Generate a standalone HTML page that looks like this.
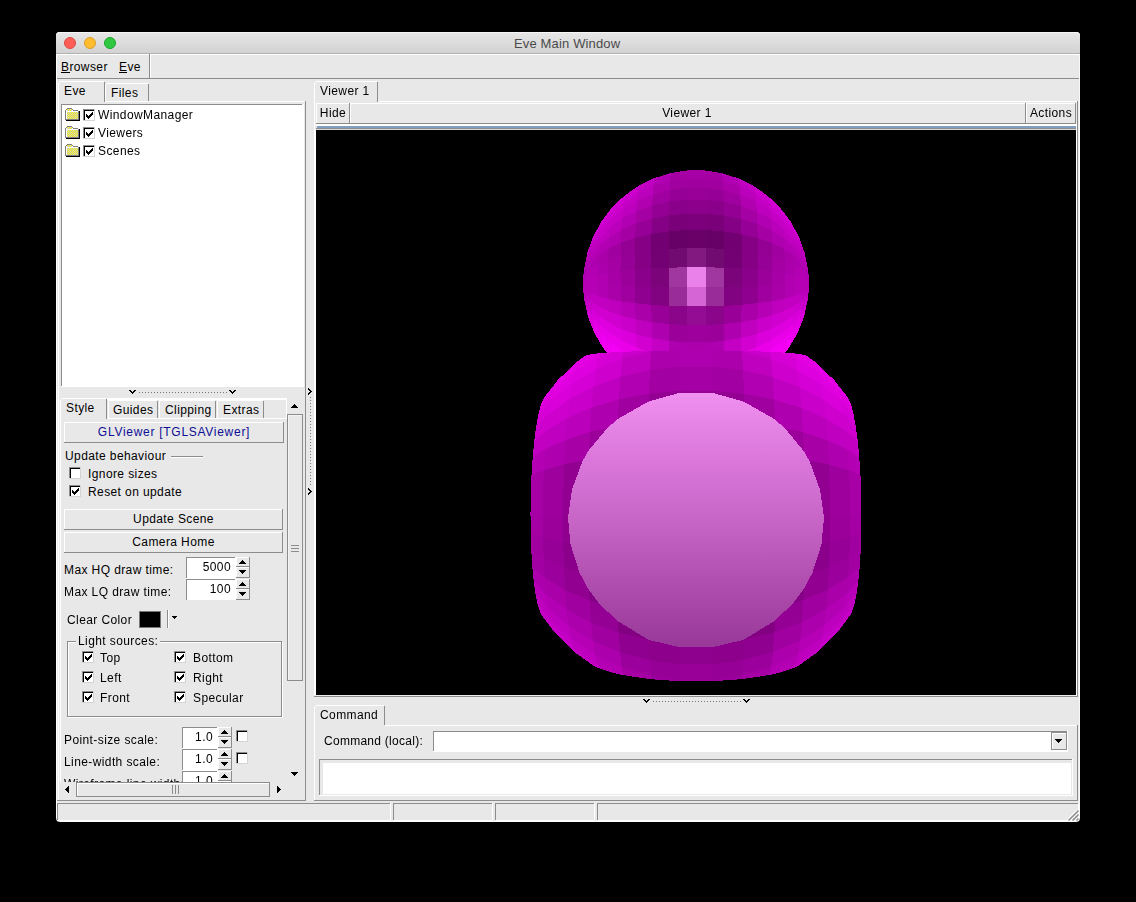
<!DOCTYPE html>
<html><head><meta charset="utf-8"><style>*{margin:0;padding:0;box-sizing:border-box}
html,body{width:1136px;height:902px;overflow:hidden;background:#000}
.a{position:absolute}
.t{font-family:"Liberation Sans", sans-serif;font-size:12px;white-space:nowrap;line-height:0;letter-spacing:0.4px}
</style></head><body>
<div class="a" style="left:56px;top:32px;width:1024px;height:790px;background:#e8e8e8;border-radius:4px 4px 4px 4px"></div><div class="a" style="left:56px;top:32px;width:1024px;height:22px;border-radius:4px 4px 0 0;background:linear-gradient(#e7e7e7,#d1d1d1);box-shadow:inset 0 1px 0 #f6f6f6"></div><div class="a" style="left:56px;top:53px;width:1024px;height:1px;background:#b2b2b2;"></div><div class="a" style="left:64px;top:37px;width:12px;height:12px;border-radius:50%;background:#fd5f57;border:1px solid #df4744"></div><div class="a" style="left:84px;top:37px;width:12px;height:12px;border-radius:50%;background:#febc2e;border:1px solid #de9f27"></div><div class="a" style="left:104px;top:37px;width:12px;height:12px;border-radius:50%;background:#30c841;border:1px solid #1aa62a"></div><div class="a t" style="left:514px;top:44px;font-size:13px;color:#4a4a4a;letter-spacing:0.15px">Eve Main Window</div><div class="a" style="left:57px;top:54px;width:1022px;height:1px;background:#ffffff;"></div><div class="a" style="left:57px;top:78px;width:1022px;height:1px;background:#8c8c8c;"></div><div class="a t" style="left:61px;top:67px;font-size:12px;color:#000;">Browser</div><div class="a" style="left:61px;top:72px;width:9px;height:1px;background:#000;"></div><div class="a t" style="left:119px;top:67px;font-size:12px;color:#000;">Eve</div><div class="a" style="left:119px;top:72px;width:8px;height:1px;background:#000;"></div><div class="a" style="left:149px;top:54px;width:1px;height:24px;background:#8c8c8c;"></div><div class="a" style="left:150px;top:54px;width:1px;height:24px;background:#ffffff;"></div><div class="a" style="left:305px;top:101px;width:1px;height:700px;background:#8c8c8c;"></div><div class="a" style="left:57px;top:800px;width:249px;height:1px;background:#8c8c8c;"></div><div class="a" style="left:58px;top:83px;width:1px;height:717px;background:#ffffff;"></div><div class="a" style="left:60px;top:398px;width:1px;height:400px;background:#ffffff;"></div><div class="a" style="left:107px;top:83px;width:41px;height:1px;background:#ffffff;"></div><div class="a" style="left:106px;top:84px;width:1px;height:1px;background:#ffffff;"></div><div class="a" style="left:105px;top:85px;width:1px;height:16px;background:#ffffff;"></div><div class="a" style="left:148px;top:84px;width:1px;height:17px;background:#8c8c8c;"></div><div class="a" style="left:58px;top:101px;width:247px;height:1px;background:#ffffff;"></div><div class="a" style="left:58px;top:81px;width:47px;height:21px;background:#e8e8e8;"></div><div class="a" style="left:58px;top:81px;width:2px;height:2px;background:#e8e8e8;"></div><div class="a" style="left:60px;top:81px;width:44px;height:1px;background:#ffffff;"></div><div class="a" style="left:59px;top:82px;width:1px;height:1px;background:#ffffff;"></div><div class="a" style="left:58px;top:83px;width:1px;height:19px;background:#ffffff;"></div><div class="a" style="left:104px;top:82px;width:1px;height:20px;background:#8c8c8c;"></div><div class="a t" style="left:64px;top:91px;font-size:12px;color:#000;">Eve</div><div class="a t" style="left:111px;top:93px;font-size:12px;color:#000;">Files</div><div class="a" style="left:61px;top:104px;width:243px;height:283px;background:#fff;"></div><div class="a" style="left:61px;top:104px;width:241px;height:1px;background:#8c8c8c;"></div><div class="a" style="left:61px;top:104px;width:1px;height:282px;background:#8c8c8c;"></div><svg class="a" style="left:64px;top:106px" width="17" height="16" shape-rendering="crispEdges"><defs><pattern id="dz0" width="2" height="2" patternUnits="userSpaceOnUse"><rect width="2" height="2" fill="#c4c4d4"/><rect width="1" height="1" fill="#ffff00"/><rect x="1" y="1" width="1" height="1" fill="#ffff00"/></pattern></defs><rect x="3" y="3" width="5" height="2" fill="url(#dz0)"/><rect x="2" y="5" width="12" height="9" fill="url(#dz0)"/><rect x="2" y="5" width="12" height="1" fill="#fff"/><rect x="2" y="5" width="1" height="9" fill="#fff"/><path d="M3 2h5v1h-5z M2 3h1v1h-1z M8 3h1v1h-1z M1 4h1v10h-1z M9 4h5v1h-5z M14 5h1v9h-1z M2 13h12v1h-12z" fill="#808080"/><path d="M2 14h14v1h-14z M15 5h1v9h-1z" fill="#000"/></svg><div class="a" style="left:83px;top:109px;width:12px;height:12px;background:#fff;"></div><div class="a" style="left:83px;top:109px;width:12px;height:1px;background:#8c8c8c;"></div><div class="a" style="left:83px;top:109px;width:1px;height:12px;background:#8c8c8c;"></div><div class="a" style="left:84px;top:110px;width:10px;height:1px;background:#000;"></div><div class="a" style="left:84px;top:110px;width:1px;height:10px;background:#000;"></div><div class="a" style="left:83px;top:120px;width:12px;height:1px;background:#d4d4d4;"></div><div class="a" style="left:94px;top:109px;width:1px;height:12px;background:#d4d4d4;"></div><svg class="a" style="left:83px;top:109px" width="12" height="12" shape-rendering="crispEdges"><path d="M3 5h1v3h-1zM4 6h1v3h-1zM5 7h1v3h-1zM6 6h1v3h-1zM7 5h1v3h-1zM8 4h1v3h-1zM9 3h1v3h-1z" fill="#000"/></svg><div class="a t" style="left:98px;top:115px;font-size:12px;color:#000;will-change:transform">WindowManager</div><svg class="a" style="left:64px;top:124px" width="17" height="16" shape-rendering="crispEdges"><defs><pattern id="dz1" width="2" height="2" patternUnits="userSpaceOnUse"><rect width="2" height="2" fill="#c4c4d4"/><rect width="1" height="1" fill="#ffff00"/><rect x="1" y="1" width="1" height="1" fill="#ffff00"/></pattern></defs><rect x="3" y="3" width="5" height="2" fill="url(#dz1)"/><rect x="2" y="5" width="12" height="9" fill="url(#dz1)"/><rect x="2" y="5" width="12" height="1" fill="#fff"/><rect x="2" y="5" width="1" height="9" fill="#fff"/><path d="M3 2h5v1h-5z M2 3h1v1h-1z M8 3h1v1h-1z M1 4h1v10h-1z M9 4h5v1h-5z M14 5h1v9h-1z M2 13h12v1h-12z" fill="#808080"/><path d="M2 14h14v1h-14z M15 5h1v9h-1z" fill="#000"/></svg><div class="a" style="left:83px;top:127px;width:12px;height:12px;background:#fff;"></div><div class="a" style="left:83px;top:127px;width:12px;height:1px;background:#8c8c8c;"></div><div class="a" style="left:83px;top:127px;width:1px;height:12px;background:#8c8c8c;"></div><div class="a" style="left:84px;top:128px;width:10px;height:1px;background:#000;"></div><div class="a" style="left:84px;top:128px;width:1px;height:10px;background:#000;"></div><div class="a" style="left:83px;top:138px;width:12px;height:1px;background:#d4d4d4;"></div><div class="a" style="left:94px;top:127px;width:1px;height:12px;background:#d4d4d4;"></div><svg class="a" style="left:83px;top:127px" width="12" height="12" shape-rendering="crispEdges"><path d="M3 5h1v3h-1zM4 6h1v3h-1zM5 7h1v3h-1zM6 6h1v3h-1zM7 5h1v3h-1zM8 4h1v3h-1zM9 3h1v3h-1z" fill="#000"/></svg><div class="a t" style="left:98px;top:133px;font-size:12px;color:#000;will-change:transform">Viewers</div><svg class="a" style="left:64px;top:142px" width="17" height="16" shape-rendering="crispEdges"><defs><pattern id="dz2" width="2" height="2" patternUnits="userSpaceOnUse"><rect width="2" height="2" fill="#c4c4d4"/><rect width="1" height="1" fill="#ffff00"/><rect x="1" y="1" width="1" height="1" fill="#ffff00"/></pattern></defs><rect x="3" y="3" width="5" height="2" fill="url(#dz2)"/><rect x="2" y="5" width="12" height="9" fill="url(#dz2)"/><rect x="2" y="5" width="12" height="1" fill="#fff"/><rect x="2" y="5" width="1" height="9" fill="#fff"/><path d="M3 2h5v1h-5z M2 3h1v1h-1z M8 3h1v1h-1z M1 4h1v10h-1z M9 4h5v1h-5z M14 5h1v9h-1z M2 13h12v1h-12z" fill="#808080"/><path d="M2 14h14v1h-14z M15 5h1v9h-1z" fill="#000"/></svg><div class="a" style="left:83px;top:145px;width:12px;height:12px;background:#fff;"></div><div class="a" style="left:83px;top:145px;width:12px;height:1px;background:#8c8c8c;"></div><div class="a" style="left:83px;top:145px;width:1px;height:12px;background:#8c8c8c;"></div><div class="a" style="left:84px;top:146px;width:10px;height:1px;background:#000;"></div><div class="a" style="left:84px;top:146px;width:1px;height:10px;background:#000;"></div><div class="a" style="left:83px;top:156px;width:12px;height:1px;background:#d4d4d4;"></div><div class="a" style="left:94px;top:145px;width:1px;height:12px;background:#d4d4d4;"></div><svg class="a" style="left:83px;top:145px" width="12" height="12" shape-rendering="crispEdges"><path d="M3 5h1v3h-1zM4 6h1v3h-1zM5 7h1v3h-1zM6 6h1v3h-1zM7 5h1v3h-1zM8 4h1v3h-1zM9 3h1v3h-1z" fill="#000"/></svg><div class="a t" style="left:98px;top:151px;font-size:12px;color:#000;will-change:transform">Scenes</div><div class="a" style="left:139px;top:392px;width:1px;height:1px;background:#777;"></div><div class="a" style="left:142px;top:392px;width:1px;height:1px;background:#777;"></div><div class="a" style="left:145px;top:392px;width:1px;height:1px;background:#777;"></div><div class="a" style="left:148px;top:392px;width:1px;height:1px;background:#777;"></div><div class="a" style="left:151px;top:392px;width:1px;height:1px;background:#777;"></div><div class="a" style="left:154px;top:392px;width:1px;height:1px;background:#777;"></div><div class="a" style="left:157px;top:392px;width:1px;height:1px;background:#777;"></div><div class="a" style="left:160px;top:392px;width:1px;height:1px;background:#777;"></div><div class="a" style="left:163px;top:392px;width:1px;height:1px;background:#777;"></div><div class="a" style="left:166px;top:392px;width:1px;height:1px;background:#777;"></div><div class="a" style="left:169px;top:392px;width:1px;height:1px;background:#777;"></div><div class="a" style="left:172px;top:392px;width:1px;height:1px;background:#777;"></div><div class="a" style="left:175px;top:392px;width:1px;height:1px;background:#777;"></div><div class="a" style="left:178px;top:392px;width:1px;height:1px;background:#777;"></div><div class="a" style="left:181px;top:392px;width:1px;height:1px;background:#777;"></div><div class="a" style="left:184px;top:392px;width:1px;height:1px;background:#777;"></div><div class="a" style="left:187px;top:392px;width:1px;height:1px;background:#777;"></div><div class="a" style="left:190px;top:392px;width:1px;height:1px;background:#777;"></div><div class="a" style="left:193px;top:392px;width:1px;height:1px;background:#777;"></div><div class="a" style="left:196px;top:392px;width:1px;height:1px;background:#777;"></div><div class="a" style="left:199px;top:392px;width:1px;height:1px;background:#777;"></div><div class="a" style="left:202px;top:392px;width:1px;height:1px;background:#777;"></div><div class="a" style="left:205px;top:392px;width:1px;height:1px;background:#777;"></div><div class="a" style="left:208px;top:392px;width:1px;height:1px;background:#777;"></div><div class="a" style="left:211px;top:392px;width:1px;height:1px;background:#777;"></div><div class="a" style="left:214px;top:392px;width:1px;height:1px;background:#777;"></div><div class="a" style="left:217px;top:392px;width:1px;height:1px;background:#777;"></div><div class="a" style="left:220px;top:392px;width:1px;height:1px;background:#777;"></div><div class="a" style="left:223px;top:392px;width:1px;height:1px;background:#777;"></div><div class="a" style="left:226px;top:392px;width:1px;height:1px;background:#777;"></div><div class="a" style="left:60px;top:418px;width:227px;height:1px;background:#ffffff;"></div><div class="a" style="left:107px;top:398px;width:180px;height:2px;background:#ffffff;"></div><div class="a" style="left:286px;top:398px;width:1px;height:21px;background:#ffffff;"></div><div class="a" style="left:108px;top:400px;width:49px;height:1px;background:#ffffff;"></div><div class="a" style="left:108px;top:401px;width:1px;height:17px;background:#ffffff;"></div><div class="a" style="left:157px;top:401px;width:1px;height:17px;background:#8c8c8c;"></div><div class="a t" style="left:113px;top:410px;font-size:12px;color:#000;">Guides</div><div class="a" style="left:159px;top:400px;width:56px;height:1px;background:#ffffff;"></div><div class="a" style="left:159px;top:401px;width:1px;height:17px;background:#ffffff;"></div><div class="a" style="left:215px;top:401px;width:1px;height:17px;background:#8c8c8c;"></div><div class="a t" style="left:165px;top:410px;font-size:12px;color:#000;">Clipping</div><div class="a" style="left:217px;top:400px;width:46px;height:1px;background:#ffffff;"></div><div class="a" style="left:217px;top:401px;width:1px;height:17px;background:#ffffff;"></div><div class="a" style="left:263px;top:401px;width:1px;height:17px;background:#8c8c8c;"></div><div class="a t" style="left:223px;top:410px;font-size:12px;color:#000;">Extras</div><div class="a" style="left:60px;top:398px;width:47px;height:21px;background:#e8e8e8;"></div><div class="a" style="left:62px;top:398px;width:44px;height:1px;background:#ffffff;"></div><div class="a" style="left:60px;top:400px;width:1px;height:19px;background:#ffffff;"></div><div class="a" style="left:61px;top:399px;width:1px;height:1px;background:#ffffff;"></div><div class="a" style="left:106px;top:399px;width:1px;height:20px;background:#8c8c8c;"></div><div class="a t" style="left:66px;top:408px;font-size:12px;color:#000;">Style</div><div class="a" style="left:64px;top:422px;width:220px;height:21px;background:#e8e8e8;"></div><div class="a" style="left:64px;top:422px;width:220px;height:1px;background:#ffffff;"></div><div class="a" style="left:64px;top:422px;width:1px;height:21px;background:#ffffff;"></div><div class="a" style="left:64px;top:442px;width:220px;height:1px;background:#8c8c8c;"></div><div class="a" style="left:283px;top:422px;width:1px;height:21px;background:#8c8c8c;"></div><div class="a t" style="left:-26.0px;width:400px;text-align:center;top:432px;font-size:12px;color:#0e0e96;"><span style="letter-spacing:0.72px">GLViewer [TGLSAViewer]</span></div><div class="a t" style="left:65px;top:456px;font-size:12px;color:#000;">Update behaviour</div><div class="a" style="left:171px;top:456px;width:32px;height:1px;background:#8c8c8c;"></div><div class="a" style="left:171px;top:457px;width:32px;height:1px;background:#ffffff;"></div><div class="a" style="left:69px;top:467px;width:12px;height:12px;background:#fff;"></div><div class="a" style="left:69px;top:467px;width:12px;height:1px;background:#8c8c8c;"></div><div class="a" style="left:69px;top:467px;width:1px;height:12px;background:#8c8c8c;"></div><div class="a" style="left:70px;top:468px;width:10px;height:1px;background:#000;"></div><div class="a" style="left:70px;top:468px;width:1px;height:10px;background:#000;"></div><div class="a" style="left:69px;top:478px;width:12px;height:1px;background:#d4d4d4;"></div><div class="a" style="left:80px;top:467px;width:1px;height:12px;background:#d4d4d4;"></div><div class="a t" style="left:88px;top:474px;font-size:12px;color:#000;">Ignore sizes</div><div class="a" style="left:69px;top:485px;width:12px;height:12px;background:#fff;"></div><div class="a" style="left:69px;top:485px;width:12px;height:1px;background:#8c8c8c;"></div><div class="a" style="left:69px;top:485px;width:1px;height:12px;background:#8c8c8c;"></div><div class="a" style="left:70px;top:486px;width:10px;height:1px;background:#000;"></div><div class="a" style="left:70px;top:486px;width:1px;height:10px;background:#000;"></div><div class="a" style="left:69px;top:496px;width:12px;height:1px;background:#d4d4d4;"></div><div class="a" style="left:80px;top:485px;width:1px;height:12px;background:#d4d4d4;"></div><svg class="a" style="left:69px;top:485px" width="12" height="12" shape-rendering="crispEdges"><path d="M3 5h1v3h-1zM4 6h1v3h-1zM5 7h1v3h-1zM6 6h1v3h-1zM7 5h1v3h-1zM8 4h1v3h-1zM9 3h1v3h-1z" fill="#000"/></svg><div class="a t" style="left:88px;top:492px;font-size:12px;color:#000;">Reset on update</div><div class="a" style="left:64px;top:509px;width:219px;height:21px;background:#e8e8e8;"></div><div class="a" style="left:64px;top:509px;width:219px;height:1px;background:#ffffff;"></div><div class="a" style="left:64px;top:509px;width:1px;height:21px;background:#ffffff;"></div><div class="a" style="left:64px;top:529px;width:219px;height:1px;background:#8c8c8c;"></div><div class="a" style="left:282px;top:509px;width:1px;height:21px;background:#8c8c8c;"></div><div class="a t" style="left:-26.5px;width:400px;text-align:center;top:519px;font-size:12px;color:#000;">Update Scene</div><div class="a" style="left:64px;top:532px;width:219px;height:21px;background:#e8e8e8;"></div><div class="a" style="left:64px;top:532px;width:219px;height:1px;background:#ffffff;"></div><div class="a" style="left:64px;top:532px;width:1px;height:21px;background:#ffffff;"></div><div class="a" style="left:64px;top:552px;width:219px;height:1px;background:#8c8c8c;"></div><div class="a" style="left:282px;top:532px;width:1px;height:21px;background:#8c8c8c;"></div><div class="a t" style="left:-26.5px;width:400px;text-align:center;top:542px;font-size:12px;color:#000;">Camera Home</div><div class="a t" style="left:64px;top:570px;font-size:12px;color:#000;">Max HQ draw time:</div><div class="a" style="left:186px;top:557px;width:50px;height:22px;background:#fff;"></div><div class="a" style="left:236px;top:557px;width:14px;height:21px;background:#fff;"></div><div class="a" style="left:186px;top:557px;width:49px;height:1px;background:#8c8c8c;"></div><div class="a" style="left:186px;top:557px;width:1px;height:21px;background:#8c8c8c;"></div><div class="a" style="left:249px;top:557px;width:1px;height:21px;background:#8c8c8c;"></div><div class="a" style="left:237px;top:558px;width:12px;height:8px;background:#e8e8e8;"></div><div class="a" style="left:236px;top:566px;width:14px;height:1px;background:#8c8c8c;"></div><div class="a" style="left:237px;top:568px;width:12px;height:9px;background:#e8e8e8;"></div><div class="a" style="left:236px;top:577px;width:14px;height:1px;background:#8c8c8c;"></div><svg class="a" style="left:0;top:0" width="1136" height="902" shape-rendering="crispEdges"><path d="M242 560h1v1h-1zM241 561h3v1h-3zM240 562h5v1h-5zM239 563h7v1h-7z" fill="#000"/></svg><svg class="a" style="left:0;top:0" width="1136" height="902" shape-rendering="crispEdges"><path d="M239 570h7v1h-7zM240 571h5v1h-5zM241 572h3v1h-3zM242 573h1v1h-1z" fill="#000"/></svg><div class="a t" style="left:31px;width:200px;text-align:right;top:567px;font-size:12px;color:#000;">5000</div><div class="a t" style="left:64px;top:592px;font-size:12px;color:#000;">Max LQ draw time:</div><div class="a" style="left:186px;top:579px;width:64px;height:21px;background:#fff;"></div><div class="a" style="left:236px;top:579px;width:14px;height:21px;background:#fff;"></div><div class="a" style="left:186px;top:579px;width:49px;height:1px;background:#8c8c8c;"></div><div class="a" style="left:186px;top:579px;width:1px;height:21px;background:#8c8c8c;"></div><div class="a" style="left:249px;top:579px;width:1px;height:21px;background:#8c8c8c;"></div><div class="a" style="left:237px;top:580px;width:12px;height:8px;background:#e8e8e8;"></div><div class="a" style="left:236px;top:588px;width:14px;height:1px;background:#8c8c8c;"></div><div class="a" style="left:237px;top:590px;width:12px;height:9px;background:#e8e8e8;"></div><div class="a" style="left:236px;top:599px;width:14px;height:1px;background:#8c8c8c;"></div><svg class="a" style="left:0;top:0" width="1136" height="902" shape-rendering="crispEdges"><path d="M242 582h1v1h-1zM241 583h3v1h-3zM240 584h5v1h-5zM239 585h7v1h-7z" fill="#000"/></svg><svg class="a" style="left:0;top:0" width="1136" height="902" shape-rendering="crispEdges"><path d="M239 592h7v1h-7zM240 593h5v1h-5zM241 594h3v1h-3zM242 595h1v1h-1z" fill="#000"/></svg><div class="a t" style="left:31px;width:200px;text-align:right;top:589px;font-size:12px;color:#000;">100</div><div class="a t" style="left:67px;top:620px;font-size:12px;color:#000;">Clear Color</div><div class="a" style="left:139px;top:611px;width:22px;height:17px;background:#000;border:1px solid #777"></div><div class="a" style="left:167px;top:610px;width:1px;height:18px;background:#8c8c8c;"></div><div class="a" style="left:168px;top:610px;width:1px;height:18px;background:#ffffff;"></div><svg class="a" style="left:0;top:0" width="1136" height="902" shape-rendering="crispEdges"><path d="M172 616h5v1h-5zM173 617h3v1h-3zM174 618h1v1h-1z" fill="#000"/></svg><div class="a" style="left:67px;top:641px;width:215px;height:76px;border:1px solid #8c8c8c;box-shadow:1px 1px 0 #fff, inset 1px 1px 0 #fff"></div><div class="a" style="left:76px;top:636px;width:84px;height:10px;background:#e8e8e8;"></div><div class="a t" style="left:78px;top:641px;font-size:12px;color:#000;">Light sources:</div><div class="a" style="left:82px;top:651px;width:12px;height:12px;background:#fff;"></div><div class="a" style="left:82px;top:651px;width:12px;height:1px;background:#8c8c8c;"></div><div class="a" style="left:82px;top:651px;width:1px;height:12px;background:#8c8c8c;"></div><div class="a" style="left:83px;top:652px;width:10px;height:1px;background:#000;"></div><div class="a" style="left:83px;top:652px;width:1px;height:10px;background:#000;"></div><div class="a" style="left:82px;top:662px;width:12px;height:1px;background:#d4d4d4;"></div><div class="a" style="left:93px;top:651px;width:1px;height:12px;background:#d4d4d4;"></div><svg class="a" style="left:82px;top:651px" width="12" height="12" shape-rendering="crispEdges"><path d="M3 5h1v3h-1zM4 6h1v3h-1zM5 7h1v3h-1zM6 6h1v3h-1zM7 5h1v3h-1zM8 4h1v3h-1zM9 3h1v3h-1z" fill="#000"/></svg><div class="a t" style="left:100px;top:658px;font-size:12px;color:#000;">Top</div><div class="a" style="left:174px;top:651px;width:12px;height:12px;background:#fff;"></div><div class="a" style="left:174px;top:651px;width:12px;height:1px;background:#8c8c8c;"></div><div class="a" style="left:174px;top:651px;width:1px;height:12px;background:#8c8c8c;"></div><div class="a" style="left:175px;top:652px;width:10px;height:1px;background:#000;"></div><div class="a" style="left:175px;top:652px;width:1px;height:10px;background:#000;"></div><div class="a" style="left:174px;top:662px;width:12px;height:1px;background:#d4d4d4;"></div><div class="a" style="left:185px;top:651px;width:1px;height:12px;background:#d4d4d4;"></div><svg class="a" style="left:174px;top:651px" width="12" height="12" shape-rendering="crispEdges"><path d="M3 5h1v3h-1zM4 6h1v3h-1zM5 7h1v3h-1zM6 6h1v3h-1zM7 5h1v3h-1zM8 4h1v3h-1zM9 3h1v3h-1z" fill="#000"/></svg><div class="a t" style="left:193px;top:658px;font-size:12px;color:#000;">Bottom</div><div class="a" style="left:82px;top:671px;width:12px;height:12px;background:#fff;"></div><div class="a" style="left:82px;top:671px;width:12px;height:1px;background:#8c8c8c;"></div><div class="a" style="left:82px;top:671px;width:1px;height:12px;background:#8c8c8c;"></div><div class="a" style="left:83px;top:672px;width:10px;height:1px;background:#000;"></div><div class="a" style="left:83px;top:672px;width:1px;height:10px;background:#000;"></div><div class="a" style="left:82px;top:682px;width:12px;height:1px;background:#d4d4d4;"></div><div class="a" style="left:93px;top:671px;width:1px;height:12px;background:#d4d4d4;"></div><svg class="a" style="left:82px;top:671px" width="12" height="12" shape-rendering="crispEdges"><path d="M3 5h1v3h-1zM4 6h1v3h-1zM5 7h1v3h-1zM6 6h1v3h-1zM7 5h1v3h-1zM8 4h1v3h-1zM9 3h1v3h-1z" fill="#000"/></svg><div class="a t" style="left:100px;top:678px;font-size:12px;color:#000;">Left</div><div class="a" style="left:174px;top:671px;width:12px;height:12px;background:#fff;"></div><div class="a" style="left:174px;top:671px;width:12px;height:1px;background:#8c8c8c;"></div><div class="a" style="left:174px;top:671px;width:1px;height:12px;background:#8c8c8c;"></div><div class="a" style="left:175px;top:672px;width:10px;height:1px;background:#000;"></div><div class="a" style="left:175px;top:672px;width:1px;height:10px;background:#000;"></div><div class="a" style="left:174px;top:682px;width:12px;height:1px;background:#d4d4d4;"></div><div class="a" style="left:185px;top:671px;width:1px;height:12px;background:#d4d4d4;"></div><svg class="a" style="left:174px;top:671px" width="12" height="12" shape-rendering="crispEdges"><path d="M3 5h1v3h-1zM4 6h1v3h-1zM5 7h1v3h-1zM6 6h1v3h-1zM7 5h1v3h-1zM8 4h1v3h-1zM9 3h1v3h-1z" fill="#000"/></svg><div class="a t" style="left:193px;top:678px;font-size:12px;color:#000;">Right</div><div class="a" style="left:82px;top:691px;width:12px;height:12px;background:#fff;"></div><div class="a" style="left:82px;top:691px;width:12px;height:1px;background:#8c8c8c;"></div><div class="a" style="left:82px;top:691px;width:1px;height:12px;background:#8c8c8c;"></div><div class="a" style="left:83px;top:692px;width:10px;height:1px;background:#000;"></div><div class="a" style="left:83px;top:692px;width:1px;height:10px;background:#000;"></div><div class="a" style="left:82px;top:702px;width:12px;height:1px;background:#d4d4d4;"></div><div class="a" style="left:93px;top:691px;width:1px;height:12px;background:#d4d4d4;"></div><svg class="a" style="left:82px;top:691px" width="12" height="12" shape-rendering="crispEdges"><path d="M3 5h1v3h-1zM4 6h1v3h-1zM5 7h1v3h-1zM6 6h1v3h-1zM7 5h1v3h-1zM8 4h1v3h-1zM9 3h1v3h-1z" fill="#000"/></svg><div class="a t" style="left:100px;top:698px;font-size:12px;color:#000;">Front</div><div class="a" style="left:174px;top:691px;width:12px;height:12px;background:#fff;"></div><div class="a" style="left:174px;top:691px;width:12px;height:1px;background:#8c8c8c;"></div><div class="a" style="left:174px;top:691px;width:1px;height:12px;background:#8c8c8c;"></div><div class="a" style="left:175px;top:692px;width:10px;height:1px;background:#000;"></div><div class="a" style="left:175px;top:692px;width:1px;height:10px;background:#000;"></div><div class="a" style="left:174px;top:702px;width:12px;height:1px;background:#d4d4d4;"></div><div class="a" style="left:185px;top:691px;width:1px;height:12px;background:#d4d4d4;"></div><svg class="a" style="left:174px;top:691px" width="12" height="12" shape-rendering="crispEdges"><path d="M3 5h1v3h-1zM4 6h1v3h-1zM5 7h1v3h-1zM6 6h1v3h-1zM7 5h1v3h-1zM8 4h1v3h-1zM9 3h1v3h-1z" fill="#000"/></svg><div class="a t" style="left:193px;top:698px;font-size:12px;color:#000;">Specular</div><div class="a t" style="left:64px;top:740px;font-size:12px;color:#000;">Point-size scale:</div><div class="a" style="left:182px;top:727px;width:36px;height:22px;background:#fff;"></div><div class="a" style="left:218px;top:727px;width:14px;height:21px;background:#fff;"></div><div class="a" style="left:182px;top:727px;width:35px;height:1px;background:#8c8c8c;"></div><div class="a" style="left:182px;top:727px;width:1px;height:21px;background:#8c8c8c;"></div><div class="a" style="left:231px;top:727px;width:1px;height:21px;background:#8c8c8c;"></div><div class="a" style="left:219px;top:728px;width:12px;height:8px;background:#e8e8e8;"></div><div class="a" style="left:218px;top:736px;width:14px;height:1px;background:#8c8c8c;"></div><div class="a" style="left:219px;top:738px;width:12px;height:9px;background:#e8e8e8;"></div><div class="a" style="left:218px;top:747px;width:14px;height:1px;background:#8c8c8c;"></div><svg class="a" style="left:0;top:0" width="1136" height="902" shape-rendering="crispEdges"><path d="M224 730h1v1h-1zM223 731h3v1h-3zM222 732h5v1h-5zM221 733h7v1h-7z" fill="#000"/></svg><svg class="a" style="left:0;top:0" width="1136" height="902" shape-rendering="crispEdges"><path d="M221 740h7v1h-7zM222 741h5v1h-5zM223 742h3v1h-3zM224 743h1v1h-1z" fill="#000"/></svg><div class="a t" style="left:13px;width:200px;text-align:right;top:737px;font-size:12px;color:#000;">1.0</div><div class="a" style="left:236px;top:730px;width:12px;height:12px;background:#fff;"></div><div class="a" style="left:236px;top:730px;width:12px;height:1px;background:#8c8c8c;"></div><div class="a" style="left:236px;top:730px;width:1px;height:12px;background:#8c8c8c;"></div><div class="a" style="left:237px;top:731px;width:10px;height:1px;background:#000;"></div><div class="a" style="left:237px;top:731px;width:1px;height:10px;background:#000;"></div><div class="a" style="left:236px;top:741px;width:12px;height:1px;background:#d4d4d4;"></div><div class="a" style="left:247px;top:730px;width:1px;height:12px;background:#d4d4d4;"></div><div class="a t" style="left:64px;top:762px;font-size:12px;color:#000;">Line-width scale:</div><div class="a" style="left:182px;top:749px;width:36px;height:22px;background:#fff;"></div><div class="a" style="left:218px;top:749px;width:14px;height:21px;background:#fff;"></div><div class="a" style="left:182px;top:749px;width:35px;height:1px;background:#8c8c8c;"></div><div class="a" style="left:182px;top:749px;width:1px;height:21px;background:#8c8c8c;"></div><div class="a" style="left:231px;top:749px;width:1px;height:21px;background:#8c8c8c;"></div><div class="a" style="left:219px;top:750px;width:12px;height:8px;background:#e8e8e8;"></div><div class="a" style="left:218px;top:758px;width:14px;height:1px;background:#8c8c8c;"></div><div class="a" style="left:219px;top:760px;width:12px;height:9px;background:#e8e8e8;"></div><div class="a" style="left:218px;top:769px;width:14px;height:1px;background:#8c8c8c;"></div><svg class="a" style="left:0;top:0" width="1136" height="902" shape-rendering="crispEdges"><path d="M224 752h1v1h-1zM223 753h3v1h-3zM222 754h5v1h-5zM221 755h7v1h-7z" fill="#000"/></svg><svg class="a" style="left:0;top:0" width="1136" height="902" shape-rendering="crispEdges"><path d="M221 762h7v1h-7zM222 763h5v1h-5zM223 764h3v1h-3zM224 765h1v1h-1z" fill="#000"/></svg><div class="a t" style="left:13px;width:200px;text-align:right;top:759px;font-size:12px;color:#000;">1.0</div><div class="a" style="left:236px;top:752px;width:12px;height:12px;background:#fff;"></div><div class="a" style="left:236px;top:752px;width:12px;height:1px;background:#8c8c8c;"></div><div class="a" style="left:236px;top:752px;width:1px;height:12px;background:#8c8c8c;"></div><div class="a" style="left:237px;top:753px;width:10px;height:1px;background:#000;"></div><div class="a" style="left:237px;top:753px;width:1px;height:10px;background:#000;"></div><div class="a" style="left:236px;top:763px;width:12px;height:1px;background:#d4d4d4;"></div><div class="a" style="left:247px;top:752px;width:1px;height:12px;background:#d4d4d4;"></div><div class="a" style="left:60px;top:771px;width:226px;height:11px;overflow:hidden"><div class="a t" style="left:4px;top:13px">Wireframe line width:</div></div><div class="a" style="left:182px;top:771px;width:36px;height:22px;background:#fff;"></div><div class="a" style="left:218px;top:771px;width:14px;height:21px;background:#fff;"></div><div class="a" style="left:182px;top:771px;width:35px;height:1px;background:#8c8c8c;"></div><div class="a" style="left:182px;top:771px;width:1px;height:21px;background:#8c8c8c;"></div><div class="a" style="left:231px;top:771px;width:1px;height:21px;background:#8c8c8c;"></div><div class="a" style="left:219px;top:772px;width:12px;height:8px;background:#e8e8e8;"></div><div class="a" style="left:218px;top:780px;width:14px;height:1px;background:#8c8c8c;"></div><div class="a" style="left:219px;top:782px;width:12px;height:9px;background:#e8e8e8;"></div><div class="a" style="left:218px;top:791px;width:14px;height:1px;background:#8c8c8c;"></div><svg class="a" style="left:0;top:0" width="1136" height="902" shape-rendering="crispEdges"><path d="M224 774h1v1h-1zM223 775h3v1h-3zM222 776h5v1h-5zM221 777h7v1h-7z" fill="#000"/></svg><svg class="a" style="left:0;top:0" width="1136" height="902" shape-rendering="crispEdges"><path d="M221 784h7v1h-7zM222 785h5v1h-5zM223 786h3v1h-3zM224 787h1v1h-1z" fill="#000"/></svg><div class="a t" style="left:13px;width:200px;text-align:right;top:781px;font-size:12px;color:#000;">1.0</div><div class="a" style="left:60px;top:782px;width:226px;height:16px;background:#e8e8e8;"></div><svg class="a" style="left:0;top:0" width="1136" height="902" shape-rendering="crispEdges"><path d="M294 404h1v1h-1zM293 405h3v1h-3zM292 406h5v1h-5zM291 407h7v1h-7z" fill="#000"/></svg><div class="a" style="left:287px;top:414px;width:16px;height:267px;background:#e8e8e8;border:1px solid #8c8c8c"></div><div class="a" style="left:288px;top:415px;width:14px;height:1px;background:#f4f4f4;"></div><div class="a" style="left:288px;top:415px;width:1px;height:265px;background:#f4f4f4;"></div><div class="a" style="left:291px;top:545px;width:8px;height:1px;background:#8c8c8c;"></div><div class="a" style="left:291px;top:548px;width:8px;height:1px;background:#8c8c8c;"></div><div class="a" style="left:291px;top:551px;width:8px;height:1px;background:#8c8c8c;"></div><svg class="a" style="left:0;top:0" width="1136" height="902" shape-rendering="crispEdges"><path d="M291 772h7v1h-7zM292 773h5v1h-5zM293 774h3v1h-3zM294 775h1v1h-1z" fill="#000"/></svg><svg class="a" style="left:0;top:0" width="1136" height="902" shape-rendering="crispEdges"><path d="M65 789v1h1v-1zM66 788v3h1v-3zM67 787v5h1v-5zM68 786v7h1v-7z" fill="#000"/></svg><div class="a" style="left:76px;top:782px;width:194px;height:15px;background:#e8e8e8;border:1px solid #8c8c8c"></div><div class="a" style="left:77px;top:783px;width:192px;height:1px;background:#ffffff;"></div><div class="a" style="left:77px;top:783px;width:1px;height:13px;background:#ffffff;"></div><div class="a" style="left:172px;top:785px;width:1px;height:9px;background:#8c8c8c;"></div><div class="a" style="left:175px;top:785px;width:1px;height:9px;background:#8c8c8c;"></div><div class="a" style="left:178px;top:785px;width:1px;height:9px;background:#8c8c8c;"></div><svg class="a" style="left:0;top:0" width="1136" height="902" shape-rendering="crispEdges"><path d="M277 786v7h1v-7zM278 787v5h1v-5zM279 788v3h1v-3zM280 789v1h1v-1z" fill="#000"/></svg><div class="a" style="left:310px;top:397px;width:1px;height:1px;background:#777;"></div><div class="a" style="left:310px;top:400px;width:1px;height:1px;background:#777;"></div><div class="a" style="left:310px;top:403px;width:1px;height:1px;background:#777;"></div><div class="a" style="left:310px;top:406px;width:1px;height:1px;background:#777;"></div><div class="a" style="left:310px;top:409px;width:1px;height:1px;background:#777;"></div><div class="a" style="left:310px;top:412px;width:1px;height:1px;background:#777;"></div><div class="a" style="left:310px;top:415px;width:1px;height:1px;background:#777;"></div><div class="a" style="left:310px;top:418px;width:1px;height:1px;background:#777;"></div><div class="a" style="left:310px;top:421px;width:1px;height:1px;background:#777;"></div><div class="a" style="left:310px;top:424px;width:1px;height:1px;background:#777;"></div><div class="a" style="left:310px;top:427px;width:1px;height:1px;background:#777;"></div><div class="a" style="left:310px;top:430px;width:1px;height:1px;background:#777;"></div><div class="a" style="left:310px;top:433px;width:1px;height:1px;background:#777;"></div><div class="a" style="left:310px;top:436px;width:1px;height:1px;background:#777;"></div><div class="a" style="left:310px;top:439px;width:1px;height:1px;background:#777;"></div><div class="a" style="left:310px;top:442px;width:1px;height:1px;background:#777;"></div><div class="a" style="left:310px;top:445px;width:1px;height:1px;background:#777;"></div><div class="a" style="left:310px;top:448px;width:1px;height:1px;background:#777;"></div><div class="a" style="left:310px;top:451px;width:1px;height:1px;background:#777;"></div><div class="a" style="left:310px;top:454px;width:1px;height:1px;background:#777;"></div><div class="a" style="left:310px;top:457px;width:1px;height:1px;background:#777;"></div><div class="a" style="left:310px;top:460px;width:1px;height:1px;background:#777;"></div><div class="a" style="left:310px;top:463px;width:1px;height:1px;background:#777;"></div><div class="a" style="left:310px;top:466px;width:1px;height:1px;background:#777;"></div><div class="a" style="left:310px;top:469px;width:1px;height:1px;background:#777;"></div><div class="a" style="left:310px;top:472px;width:1px;height:1px;background:#777;"></div><div class="a" style="left:310px;top:475px;width:1px;height:1px;background:#777;"></div><div class="a" style="left:310px;top:478px;width:1px;height:1px;background:#777;"></div><div class="a" style="left:310px;top:481px;width:1px;height:1px;background:#777;"></div><div class="a" style="left:310px;top:484px;width:1px;height:1px;background:#777;"></div><div class="a" style="left:314px;top:82px;width:1px;height:614px;background:#ffffff;"></div><div class="a" style="left:315px;top:130px;width:1px;height:566px;background:#ffffff;"></div><div class="a" style="left:1077px;top:101px;width:1px;height:596px;background:#8c8c8c;"></div><div class="a" style="left:1077px;top:725px;width:1px;height:76px;background:#8c8c8c;"></div><div class="a" style="left:314px;top:707px;width:1px;height:94px;background:#ffffff;"></div><div class="a" style="left:314px;top:81px;width:64px;height:21px;background:#e8e8e8;"></div><div class="a" style="left:316px;top:81px;width:61px;height:1px;background:#ffffff;"></div><div class="a" style="left:314px;top:83px;width:1px;height:19px;background:#ffffff;"></div><div class="a" style="left:315px;top:82px;width:1px;height:1px;background:#ffffff;"></div><div class="a" style="left:377px;top:82px;width:1px;height:20px;background:#8c8c8c;"></div><div class="a t" style="left:320px;top:91px;font-size:12px;color:#000;">Viewer 1</div><div class="a" style="left:378px;top:101px;width:699px;height:1px;background:#ffffff;"></div><div class="a" style="left:316px;top:103px;width:34px;height:21px;background:#e8e8e8;"></div><div class="a" style="left:316px;top:103px;width:34px;height:1px;background:#ffffff;"></div><div class="a" style="left:316px;top:103px;width:1px;height:21px;background:#ffffff;"></div><div class="a" style="left:316px;top:123px;width:34px;height:1px;background:#8c8c8c;"></div><div class="a" style="left:349px;top:103px;width:1px;height:21px;background:#8c8c8c;"></div><div class="a t" style="left:133.0px;width:400px;text-align:center;top:113px;font-size:12px;color:#000;">Hide</div><div class="a" style="left:350px;top:103px;width:676px;height:21px;background:#e8e8e8;"></div><div class="a" style="left:350px;top:103px;width:676px;height:1px;background:#ffffff;"></div><div class="a" style="left:350px;top:103px;width:1px;height:21px;background:#ffffff;"></div><div class="a" style="left:350px;top:123px;width:676px;height:1px;background:#8c8c8c;"></div><div class="a" style="left:1025px;top:103px;width:1px;height:21px;background:#8c8c8c;"></div><div class="a t" style="left:487px;width:400px;text-align:center;top:113px;font-size:12px;color:#000;">Viewer 1</div><div class="a" style="left:1026px;top:103px;width:50px;height:21px;background:#e8e8e8;"></div><div class="a" style="left:1026px;top:103px;width:50px;height:1px;background:#ffffff;"></div><div class="a" style="left:1026px;top:103px;width:1px;height:21px;background:#ffffff;"></div><div class="a" style="left:1026px;top:123px;width:50px;height:1px;background:#8c8c8c;"></div><div class="a" style="left:1075px;top:103px;width:1px;height:21px;background:#8c8c8c;"></div><div class="a t" style="left:851.0px;width:400px;text-align:center;top:113px;font-size:12px;color:#000;">Actions</div><div class="a" style="left:316px;top:124px;width:761px;height:2px;background:#ffffff;"></div><div class="a" style="left:317px;top:126px;width:759px;height:2px;background:#7f9fc1;"></div><div class="a" style="left:316px;top:128px;width:761px;height:1px;background:#8c8c8c;"></div><div class="a" style="left:316px;top:129px;width:761px;height:1px;background:#d8d8d8;"></div><div class="a" style="left:316px;top:130px;width:760px;height:565px;background:#000;"></div><svg class="a" style="left:0;top:0" width="1136" height="902"><defs><clipPath id="vp"><rect x="316" y="130" width="760" height="565"/></clipPath></defs><g clip-path="url(#vp)"><g shape-rendering="crispEdges"><path d="M807.5 270.0L804.7 255.2L805.2 257.9L807.7 271.4Z" fill="#b500b5" stroke="#b500b5" stroke-width="1"/><path d="M807.7 271.4L805.2 257.9L805.5 261.4L807.9 273.2Z" fill="#b300b3" stroke="#b300b3" stroke-width="1"/><path d="M807.9 273.2L805.5 261.4L805.8 265.5L808.1 275.2Z" fill="#b000b0" stroke="#b000b0" stroke-width="1"/><path d="M808.1 275.2L805.8 265.5L806.0 270.0L808.2 277.5Z" fill="#ad00ad" stroke="#ad00ad" stroke-width="1"/><path d="M808.2 277.5L806.0 270.0L806.2 275.0L808.2 280.0Z" fill="#af00af" stroke="#af00af" stroke-width="1"/><path d="M808.2 280.0L806.2 275.0L806.2 280.3L808.3 282.6Z" fill="#b100b1" stroke="#b100b1" stroke-width="1"/><path d="M808.3 282.6L806.2 280.3L806.2 285.6L808.3 285.3Z" fill="#b200b2" stroke="#b200b2" stroke-width="1"/><path d="M808.3 285.3L806.2 285.6L806.1 291.0L808.2 288.0Z" fill="#b200b2" stroke="#b200b2" stroke-width="1"/><path d="M808.2 288.0L806.1 291.0L805.9 296.1L808.1 290.5Z" fill="#b200b2" stroke="#b200b2" stroke-width="1"/><path d="M808.1 290.5L805.9 296.1L805.6 301.0L808.0 293.0Z" fill="#b700b7" stroke="#b700b7" stroke-width="1"/><path d="M808.0 293.0L805.6 301.0L805.2 305.4L807.8 295.2Z" fill="#bc00bc" stroke="#bc00bc" stroke-width="1"/><path d="M807.8 295.2L805.2 305.4L804.8 309.3L807.6 297.2Z" fill="#c000c0" stroke="#c000c0" stroke-width="1"/><path d="M807.6 297.2L804.8 309.3L804.4 312.6L807.3 298.8Z" fill="#c300c3" stroke="#c300c3" stroke-width="1"/><path d="M807.3 298.8L804.4 312.6L803.9 315.1L807.1 300.1Z" fill="#c400c4" stroke="#c400c4" stroke-width="1"/><path d="M804.3 253.2L798.8 237.9L799.4 240.7L804.7 255.2Z" fill="#c500c5" stroke="#c500c5" stroke-width="1"/><path d="M804.7 255.2L799.4 240.7L800.0 244.7L805.2 257.9Z" fill="#c200c2" stroke="#c200c2" stroke-width="1"/><path d="M805.2 257.9L800.0 244.7L800.5 249.8L805.5 261.4Z" fill="#be00be" stroke="#be00be" stroke-width="1"/><path d="M805.5 261.4L800.5 249.8L800.9 255.9L805.8 265.5Z" fill="#b900b9" stroke="#b900b9" stroke-width="1"/><path d="M805.8 265.5L800.9 255.9L801.3 262.7L806.0 270.0Z" fill="#b300b3" stroke="#b300b3" stroke-width="1"/><path d="M806.0 270.0L801.3 262.7L801.5 270.1L806.2 275.0Z" fill="#b100b1" stroke="#b100b1" stroke-width="1"/><path d="M806.2 275.0L801.5 270.1L801.5 277.9L806.2 280.3Z" fill="#b400b4" stroke="#b400b4" stroke-width="1"/><path d="M806.2 280.3L801.5 277.9L801.5 286.0L806.2 285.6Z" fill="#b500b5" stroke="#b500b5" stroke-width="1"/><path d="M806.2 285.6L801.5 286.0L801.3 293.9L806.1 291.0Z" fill="#b600b6" stroke="#b600b6" stroke-width="1"/><path d="M806.1 291.0L801.3 293.9L801.0 301.7L805.9 296.1Z" fill="#bc00bc" stroke="#bc00bc" stroke-width="1"/><path d="M805.9 296.1L801.0 301.7L800.6 308.9L805.6 301.0Z" fill="#c500c5" stroke="#c500c5" stroke-width="1"/><path d="M805.6 301.0L800.6 308.9L800.1 315.4L805.2 305.4Z" fill="#cc00cc" stroke="#cc00cc" stroke-width="1"/><path d="M805.2 305.4L800.1 315.4L799.5 321.2L804.8 309.3Z" fill="#d300d3" stroke="#d300d3" stroke-width="1"/><path d="M804.8 309.3L799.5 321.2L798.9 325.9L804.4 312.6Z" fill="#d700d7" stroke="#d700d7" stroke-width="1"/><path d="M804.4 312.6L798.9 325.9L798.2 329.6L803.9 315.1Z" fill="#da00da" stroke="#da00da" stroke-width="1"/><path d="M803.9 315.1L798.2 329.6L797.5 332.1L803.4 316.9Z" fill="#db00db" stroke="#db00db" stroke-width="1"/><path d="M798.1 236.2L790.0 221.4L790.8 223.4L798.8 237.9Z" fill="#d000d0" stroke="#d000d0" stroke-width="1"/><path d="M798.8 237.9L790.8 223.4L791.6 227.1L799.4 240.7Z" fill="#ce00ce" stroke="#ce00ce" stroke-width="1"/><path d="M799.4 240.7L791.6 227.1L792.3 232.2L800.0 244.7Z" fill="#cb00cb" stroke="#cb00cb" stroke-width="1"/><path d="M800.0 244.7L792.3 232.2L793.0 238.8L800.5 249.8Z" fill="#c500c5" stroke="#c500c5" stroke-width="1"/><path d="M800.5 249.8L793.0 238.8L793.5 246.7L800.9 255.9Z" fill="#be00be" stroke="#be00be" stroke-width="1"/><path d="M800.9 255.9L793.5 246.7L793.9 255.6L801.3 262.7Z" fill="#b600b6" stroke="#b600b6" stroke-width="1"/><path d="M801.3 262.7L793.9 255.6L794.1 265.4L801.5 270.1Z" fill="#af00af" stroke="#af00af" stroke-width="1"/><path d="M801.5 270.1L794.1 265.4L794.2 275.7L801.5 277.9Z" fill="#b200b2" stroke="#b200b2" stroke-width="1"/><path d="M801.5 277.9L794.2 275.7L794.1 286.3L801.5 286.0Z" fill="#b500b5" stroke="#b500b5" stroke-width="1"/><path d="M801.5 286.0L794.1 286.3L793.9 296.8L801.3 293.9Z" fill="#b600b6" stroke="#b600b6" stroke-width="1"/><path d="M801.3 293.9L793.9 296.8L793.6 306.9L801.0 301.7Z" fill="#c100c1" stroke="#c100c1" stroke-width="1"/><path d="M801.0 301.7L793.6 306.9L793.1 316.4L800.6 308.9Z" fill="#cd00cd" stroke="#cd00cd" stroke-width="1"/><path d="M800.6 308.9L793.1 316.4L792.5 324.9L800.1 315.4Z" fill="#d800d8" stroke="#d800d8" stroke-width="1"/><path d="M800.1 315.4L792.5 324.9L791.8 332.4L799.5 321.2Z" fill="#e000e0" stroke="#e000e0" stroke-width="1"/><path d="M799.5 321.2L791.8 332.4L791.0 338.5L798.9 325.9Z" fill="#e700e7" stroke="#e700e7" stroke-width="1"/><path d="M798.9 325.9L791.0 338.5L790.2 343.1L798.2 329.6Z" fill="#ea00ea" stroke="#ea00ea" stroke-width="1"/><path d="M798.2 329.6L790.2 343.1L789.3 346.3L797.5 332.1Z" fill="#eb00eb" stroke="#eb00eb" stroke-width="1"/><path d="M797.5 332.1L789.3 346.3L788.4 347.8L796.8 333.4Z" fill="#ea00ea" stroke="#ea00ea" stroke-width="1"/><path d="M790.0 221.4L779.7 208.0L780.6 210.3L790.8 223.4Z" fill="#d500d5" stroke="#d500d5" stroke-width="1"/><path d="M790.8 223.4L780.6 210.3L781.4 214.5L791.6 227.1Z" fill="#d200d2" stroke="#d200d2" stroke-width="1"/><path d="M791.6 227.1L781.4 214.5L782.2 220.7L792.3 232.2Z" fill="#ce00ce" stroke="#ce00ce" stroke-width="1"/><path d="M792.3 232.2L782.2 220.7L782.9 228.7L793.0 238.8Z" fill="#c700c7" stroke="#c700c7" stroke-width="1"/><path d="M793.0 238.8L782.9 228.7L783.5 238.2L793.5 246.7Z" fill="#bf00bf" stroke="#bf00bf" stroke-width="1"/><path d="M793.5 246.7L783.5 238.2L783.9 249.1L793.9 255.6Z" fill="#b400b4" stroke="#b400b4" stroke-width="1"/><path d="M793.9 255.6L783.9 249.1L784.2 261.0L794.1 265.4Z" fill="#a900a9" stroke="#a900a9" stroke-width="1"/><path d="M794.1 265.4L784.2 261.0L784.3 273.6L794.2 275.7Z" fill="#ad00ad" stroke="#ad00ad" stroke-width="1"/><path d="M794.2 275.7L784.3 273.6L784.2 286.6L794.1 286.3Z" fill="#b000b0" stroke="#b000b0" stroke-width="1"/><path d="M794.1 286.3L784.2 286.6L784.0 299.4L793.9 296.8Z" fill="#b100b1" stroke="#b100b1" stroke-width="1"/><path d="M793.9 296.8L784.0 299.4L783.6 311.8L793.6 306.9Z" fill="#c200c2" stroke="#c200c2" stroke-width="1"/><path d="M793.6 306.9L783.6 311.8L783.1 323.3L793.1 316.4Z" fill="#d100d1" stroke="#d100d1" stroke-width="1"/><path d="M793.1 316.4L783.1 323.3L782.4 333.7L792.5 324.9Z" fill="#de00de" stroke="#de00de" stroke-width="1"/><path d="M792.5 324.9L782.4 333.7L781.6 342.6L791.8 332.4Z" fill="#e900e9" stroke="#e900e9" stroke-width="1"/><path d="M791.8 332.4L781.6 342.6L780.8 350.0L791.0 338.5Z" fill="#f000f0" stroke="#f000f0" stroke-width="1"/><path d="M791.0 338.5L780.8 350.0L779.9 355.5L790.2 343.1Z" fill="#f500f5" stroke="#f500f5" stroke-width="1"/><path d="M790.2 343.1L779.9 355.5L779.0 359.2L789.3 346.3Z" fill="#f600f6" stroke="#f600f6" stroke-width="1"/><path d="M789.3 346.3L779.0 359.2L778.0 360.9L788.4 347.8Z" fill="#f500f5" stroke="#f500f5" stroke-width="1"/><path d="M779.7 208.0L767.4 196.2L768.3 198.7L780.6 210.3Z" fill="#d400d4" stroke="#d400d4" stroke-width="1"/><path d="M780.6 210.3L768.3 198.7L769.1 203.5L781.4 214.5Z" fill="#d100d1" stroke="#d100d1" stroke-width="1"/><path d="M781.4 214.5L769.1 203.5L769.9 210.5L782.2 220.7Z" fill="#cc00cc" stroke="#cc00cc" stroke-width="1"/><path d="M782.2 220.7L769.9 210.5L770.6 219.6L782.9 228.7Z" fill="#c400c4" stroke="#c400c4" stroke-width="1"/><path d="M782.9 228.7L770.6 219.6L771.2 230.7L783.5 238.2Z" fill="#ba00ba" stroke="#ba00ba" stroke-width="1"/><path d="M783.5 238.2L771.2 230.7L771.6 243.3L783.9 249.1Z" fill="#ae00ae" stroke="#ae00ae" stroke-width="1"/><path d="M783.9 249.1L771.6 243.3L771.9 257.1L784.2 261.0Z" fill="#a000a0" stroke="#a000a0" stroke-width="1"/><path d="M784.2 261.0L771.9 257.1L772.0 271.8L784.3 273.6Z" fill="#a400a4" stroke="#a400a4" stroke-width="1"/><path d="M784.3 273.6L772.0 271.8L771.9 286.8L784.2 286.6Z" fill="#a700a7" stroke="#a700a7" stroke-width="1"/><path d="M784.2 286.6L771.9 286.8L771.7 301.8L784.0 299.4Z" fill="#aa00aa" stroke="#aa00aa" stroke-width="1"/><path d="M784.0 299.4L771.7 301.8L771.3 316.1L783.6 311.8Z" fill="#be00be" stroke="#be00be" stroke-width="1"/><path d="M783.6 311.8L771.3 316.1L770.7 329.5L783.1 323.3Z" fill="#d000d0" stroke="#d000d0" stroke-width="1"/><path d="M783.1 323.3L770.7 329.5L770.1 341.4L782.4 333.7Z" fill="#df00df" stroke="#df00df" stroke-width="1"/><path d="M782.4 333.7L770.1 341.4L769.3 351.7L781.6 342.6Z" fill="#ec00ec" stroke="#ec00ec" stroke-width="1"/><path d="M781.6 342.6L769.3 351.7L768.5 360.1L780.8 350.0Z" fill="#f400f4" stroke="#f400f4" stroke-width="1"/><path d="M780.8 350.0L768.5 360.1L767.6 366.3L779.9 355.5Z" fill="#fa00fa" stroke="#fa00fa" stroke-width="1"/><path d="M779.9 355.5L767.6 366.3L766.7 370.4L779.0 359.2Z" fill="#fb00fb" stroke="#fb00fb" stroke-width="1"/><path d="M779.0 359.2L766.7 370.4L765.8 372.3L778.0 360.9Z" fill="#f900f9" stroke="#f900f9" stroke-width="1"/><path d="M767.4 196.2L753.4 186.4L754.2 189.0L768.3 198.7Z" fill="#ce00ce" stroke="#ce00ce" stroke-width="1"/><path d="M768.3 198.7L754.2 189.0L755.0 194.2L769.1 203.5Z" fill="#cb00cb" stroke="#cb00cb" stroke-width="1"/><path d="M769.1 203.5L755.0 194.2L755.7 201.9L769.9 210.5Z" fill="#c500c5" stroke="#c500c5" stroke-width="1"/><path d="M769.9 210.5L755.7 201.9L756.3 212.1L770.6 219.6Z" fill="#bd00bd" stroke="#bd00bd" stroke-width="1"/><path d="M770.6 219.6L756.3 212.1L756.8 224.3L771.2 230.7Z" fill="#b100b1" stroke="#b100b1" stroke-width="1"/><path d="M771.2 230.7L756.8 224.3L757.2 238.4L771.6 243.3Z" fill="#a400a4" stroke="#a400a4" stroke-width="1"/><path d="M771.6 243.3L757.2 238.4L757.4 253.8L771.9 257.1Z" fill="#940094" stroke="#940094" stroke-width="1"/><path d="M771.9 257.1L757.4 253.8L757.5 270.2L772.0 271.8Z" fill="#970097" stroke="#970097" stroke-width="1"/><path d="M772.0 271.8L757.5 270.2L757.5 287.1L771.9 286.8Z" fill="#9b009b" stroke="#9b009b" stroke-width="1"/><path d="M771.9 286.8L757.5 287.1L757.2 303.7L771.7 301.8Z" fill="#9f009f" stroke="#9f009f" stroke-width="1"/><path d="M771.7 301.8L757.2 303.7L756.9 319.8L771.3 316.1Z" fill="#b600b6" stroke="#b600b6" stroke-width="1"/><path d="M771.3 316.1L756.9 319.8L756.4 334.6L770.7 329.5Z" fill="#ca00ca" stroke="#ca00ca" stroke-width="1"/><path d="M770.7 329.5L756.4 334.6L755.8 347.9L770.1 341.4Z" fill="#db00db" stroke="#db00db" stroke-width="1"/><path d="M770.1 341.4L755.8 347.9L755.1 359.3L769.3 351.7Z" fill="#e900e9" stroke="#e900e9" stroke-width="1"/><path d="M769.3 351.7L755.1 359.3L754.4 368.5L768.5 360.1Z" fill="#f300f3" stroke="#f300f3" stroke-width="1"/><path d="M768.5 360.1L754.4 368.5L753.6 375.4L767.6 366.3Z" fill="#f900f9" stroke="#f900f9" stroke-width="1"/><path d="M767.6 366.3L753.6 375.4L752.8 379.8L766.7 370.4Z" fill="#fa00fa" stroke="#fa00fa" stroke-width="1"/><path d="M766.7 370.4L752.8 379.8L752.0 381.7L765.8 372.3Z" fill="#f800f8" stroke="#f800f8" stroke-width="1"/><path d="M753.4 186.4L738.0 178.8L738.7 181.5L754.2 189.0Z" fill="#c400c4" stroke="#c400c4" stroke-width="1"/><path d="M754.2 189.0L738.7 181.5L739.3 187.0L755.0 194.2Z" fill="#c000c0" stroke="#c000c0" stroke-width="1"/><path d="M755.0 194.2L739.3 187.0L739.8 195.3L755.7 201.9Z" fill="#ba00ba" stroke="#ba00ba" stroke-width="1"/><path d="M755.7 201.9L739.8 195.3L740.3 206.1L756.3 212.1Z" fill="#b000b0" stroke="#b000b0" stroke-width="1"/><path d="M756.3 212.1L740.3 206.1L740.7 219.3L756.8 224.3Z" fill="#a400a4" stroke="#a400a4" stroke-width="1"/><path d="M756.8 224.3L740.7 219.3L741.0 234.5L757.2 238.4Z" fill="#960096" stroke="#960096" stroke-width="1"/><path d="M757.2 238.4L741.0 234.5L741.2 251.3L757.4 253.8Z" fill="#850085" stroke="#850085" stroke-width="1"/><path d="M757.4 253.8L741.2 251.3L741.3 269.0L757.5 270.2Z" fill="#860086" stroke="#860086" stroke-width="1"/><path d="M757.5 270.2L741.3 269.0L741.2 287.2L757.5 287.1Z" fill="#8b008b" stroke="#8b008b" stroke-width="1"/><path d="M757.5 287.1L741.2 287.2L741.1 305.3L757.2 303.7Z" fill="#900090" stroke="#900090" stroke-width="1"/><path d="M757.2 303.7L741.1 305.3L740.8 322.6L756.9 319.8Z" fill="#a900a9" stroke="#a900a9" stroke-width="1"/><path d="M756.9 319.8L740.8 322.6L740.4 338.7L756.4 334.6Z" fill="#bf00bf" stroke="#bf00bf" stroke-width="1"/><path d="M756.4 334.6L740.4 338.7L739.9 353.0L755.8 347.9Z" fill="#d100d1" stroke="#d100d1" stroke-width="1"/><path d="M755.8 347.9L739.9 353.0L739.4 365.2L755.1 359.3Z" fill="#e000e0" stroke="#e000e0" stroke-width="1"/><path d="M755.1 359.3L739.4 365.2L738.8 375.1L754.4 368.5Z" fill="#eb00eb" stroke="#eb00eb" stroke-width="1"/><path d="M754.4 368.5L738.8 375.1L738.2 382.4L753.6 375.4Z" fill="#f100f1" stroke="#f100f1" stroke-width="1"/><path d="M753.6 375.4L738.2 382.4L737.5 387.0L752.8 379.8Z" fill="#f300f3" stroke="#f300f3" stroke-width="1"/><path d="M752.8 379.8L737.5 387.0L736.9 388.9L752.0 381.7Z" fill="#f100f1" stroke="#f100f1" stroke-width="1"/><path d="M738.0 178.8L721.6 173.6L722.0 176.4L738.7 181.5Z" fill="#b400b4" stroke="#b400b4" stroke-width="1"/><path d="M738.7 181.5L722.0 176.4L722.4 182.1L739.3 187.0Z" fill="#b100b1" stroke="#b100b1" stroke-width="1"/><path d="M739.3 187.0L722.4 182.1L722.8 190.7L739.8 195.3Z" fill="#aa00aa" stroke="#aa00aa" stroke-width="1"/><path d="M739.8 195.3L722.8 190.7L723.1 202.1L740.3 206.1Z" fill="#a000a0" stroke="#a000a0" stroke-width="1"/><path d="M740.3 206.1L723.1 202.1L723.4 215.9L740.7 219.3Z" fill="#930093" stroke="#930093" stroke-width="1"/><path d="M740.7 219.3L723.4 215.9L723.6 231.9L741.0 234.5Z" fill="#840084" stroke="#840084" stroke-width="1"/><path d="M741.0 234.5L723.6 231.9L723.7 249.5L741.2 251.3Z" fill="#720072" stroke="#720072" stroke-width="1"/><path d="M741.2 251.3L723.7 249.5L723.7 268.2L741.3 269.0Z" fill="#740174" stroke="#740174" stroke-width="1"/><path d="M741.3 269.0L723.7 268.2L723.7 287.3L741.2 287.2Z" fill="#7b047b" stroke="#7b047b" stroke-width="1"/><path d="M741.2 287.2L723.7 287.3L723.6 306.4L741.1 305.3Z" fill="#810381" stroke="#810381" stroke-width="1"/><path d="M741.1 305.3L723.6 306.4L723.4 324.6L740.8 322.6Z" fill="#980098" stroke="#980098" stroke-width="1"/><path d="M740.8 322.6L723.4 324.6L723.2 341.5L740.4 338.7Z" fill="#af00af" stroke="#af00af" stroke-width="1"/><path d="M740.4 338.7L723.2 341.5L722.9 356.5L739.9 353.0Z" fill="#c300c3" stroke="#c300c3" stroke-width="1"/><path d="M739.9 353.0L722.9 356.5L722.5 369.3L739.4 365.2Z" fill="#d200d2" stroke="#d200d2" stroke-width="1"/><path d="M739.4 365.2L722.5 369.3L722.1 379.6L738.8 375.1Z" fill="#de00de" stroke="#de00de" stroke-width="1"/><path d="M738.8 375.1L722.1 379.6L721.7 387.1L738.2 382.4Z" fill="#e400e4" stroke="#e400e4" stroke-width="1"/><path d="M738.2 382.4L721.7 387.1L721.3 391.9L737.5 387.0Z" fill="#e600e6" stroke="#e600e6" stroke-width="1"/><path d="M737.5 387.0L721.3 391.9L720.9 393.9L736.9 388.9Z" fill="#e300e3" stroke="#e300e3" stroke-width="1"/><path d="M721.6 173.6L704.6 170.9L704.8 173.8L722.0 176.4Z" fill="#a500a5" stroke="#a500a5" stroke-width="1"/><path d="M722.0 176.4L704.8 173.8L704.9 179.6L722.4 182.1Z" fill="#a400a4" stroke="#a400a4" stroke-width="1"/><path d="M722.4 182.1L704.9 179.6L705.0 188.4L722.8 190.7Z" fill="#9f009f" stroke="#9f009f" stroke-width="1"/><path d="M722.8 190.7L705.0 188.4L705.1 200.0L723.1 202.1Z" fill="#960096" stroke="#960096" stroke-width="1"/><path d="M723.1 202.1L705.1 200.0L705.2 214.2L723.4 215.9Z" fill="#8a008a" stroke="#8a008a" stroke-width="1"/><path d="M723.4 215.9L705.2 214.2L705.3 230.5L723.6 231.9Z" fill="#7a007a" stroke="#7a007a" stroke-width="1"/><path d="M723.6 231.9L705.3 230.5L705.3 248.6L723.7 249.5Z" fill="#670067" stroke="#670067" stroke-width="1"/><path d="M723.7 249.5L705.3 248.6L705.3 267.8L723.7 268.2Z" fill="#710b71" stroke="#710b71" stroke-width="1"/><path d="M723.7 268.2L705.3 267.8L705.3 287.4L723.7 287.3Z" fill="#a037a0" stroke="#a037a0" stroke-width="1"/><path d="M723.7 287.3L705.3 287.4L705.3 306.9L723.6 306.4Z" fill="#9a2c9a" stroke="#9a2c9a" stroke-width="1"/><path d="M723.6 306.4L705.3 306.9L705.2 325.6L723.4 324.6Z" fill="#8b058b" stroke="#8b058b" stroke-width="1"/><path d="M723.4 324.6L705.2 325.6L705.1 342.9L723.2 341.5Z" fill="#9b009b" stroke="#9b009b" stroke-width="1"/><path d="M723.2 341.5L705.1 342.9L705.0 358.3L722.9 356.5Z" fill="#af00af" stroke="#af00af" stroke-width="1"/><path d="M722.9 356.5L705.0 358.3L704.9 371.4L722.5 369.3Z" fill="#bf00bf" stroke="#bf00bf" stroke-width="1"/><path d="M722.5 369.3L704.9 371.4L704.8 381.8L722.1 379.6Z" fill="#cb00cb" stroke="#cb00cb" stroke-width="1"/><path d="M722.1 379.6L704.8 381.8L704.6 389.6L721.7 387.1Z" fill="#d200d2" stroke="#d200d2" stroke-width="1"/><path d="M721.7 387.1L704.6 389.6L704.5 394.4L721.3 391.9Z" fill="#d300d3" stroke="#d300d3" stroke-width="1"/><path d="M721.3 391.9L704.5 394.4L704.4 396.4L720.9 393.9Z" fill="#d000d0" stroke="#d000d0" stroke-width="1"/><path d="M704.6 170.9L687.4 170.9L687.2 173.8L704.8 173.8Z" fill="#a700a7" stroke="#a700a7" stroke-width="1"/><path d="M704.8 173.8L687.2 173.8L687.1 179.6L704.9 179.6Z" fill="#a600a6" stroke="#a600a6" stroke-width="1"/><path d="M704.9 179.6L687.1 179.6L687.0 188.4L705.0 188.4Z" fill="#a100a1" stroke="#a100a1" stroke-width="1"/><path d="M705.0 188.4L687.0 188.4L686.9 200.0L705.1 200.0Z" fill="#980098" stroke="#980098" stroke-width="1"/><path d="M705.1 200.0L686.9 200.0L686.8 214.2L705.2 214.2Z" fill="#8c008c" stroke="#8c008c" stroke-width="1"/><path d="M705.2 214.2L686.8 214.2L686.7 230.5L705.3 230.5Z" fill="#7c007c" stroke="#7c007c" stroke-width="1"/><path d="M705.3 230.5L686.7 230.5L686.7 248.6L705.3 248.6Z" fill="#690169" stroke="#690169" stroke-width="1"/><path d="M705.3 248.6L686.7 248.6L686.7 267.8L705.3 267.8Z" fill="#811981" stroke="#811981" stroke-width="1"/><path d="M705.3 267.8L686.7 267.8L686.7 287.4L705.3 287.4Z" fill="#ea80ea" stroke="#ea80ea" stroke-width="1"/><path d="M705.3 287.4L686.7 287.4L686.7 306.9L705.3 306.9Z" fill="#d565d5" stroke="#d565d5" stroke-width="1"/><path d="M705.3 306.9L686.7 306.9L686.8 325.6L705.2 325.6Z" fill="#940c94" stroke="#940c94" stroke-width="1"/><path d="M705.2 325.6L686.8 325.6L686.9 342.9L705.1 342.9Z" fill="#9d009d" stroke="#9d009d" stroke-width="1"/><path d="M705.1 342.9L686.9 342.9L687.0 358.3L705.0 358.3Z" fill="#ad00ad" stroke="#ad00ad" stroke-width="1"/><path d="M705.0 358.3L687.0 358.3L687.1 371.4L704.9 371.4Z" fill="#b900b9" stroke="#b900b9" stroke-width="1"/><path d="M704.9 371.4L687.1 371.4L687.2 381.8L704.8 381.8Z" fill="#c100c1" stroke="#c100c1" stroke-width="1"/><path d="M704.8 381.8L687.2 381.8L687.4 389.6L704.6 389.6Z" fill="#c300c3" stroke="#c300c3" stroke-width="1"/><path d="M704.6 389.6L687.4 389.6L687.5 394.4L704.5 394.4Z" fill="#c100c1" stroke="#c100c1" stroke-width="1"/><path d="M704.5 394.4L687.5 394.4L687.6 396.4L704.4 396.4Z" fill="#b900b9" stroke="#b900b9" stroke-width="1"/><path d="M687.4 170.9L670.4 173.6L670.0 176.4L687.2 173.8Z" fill="#a500a5" stroke="#a500a5" stroke-width="1"/><path d="M687.2 173.8L670.0 176.4L669.6 182.1L687.1 179.6Z" fill="#a400a4" stroke="#a400a4" stroke-width="1"/><path d="M687.1 179.6L669.6 182.1L669.2 190.7L687.0 188.4Z" fill="#9f009f" stroke="#9f009f" stroke-width="1"/><path d="M687.0 188.4L669.2 190.7L668.9 202.1L686.9 200.0Z" fill="#960096" stroke="#960096" stroke-width="1"/><path d="M686.9 200.0L668.9 202.1L668.6 215.9L686.8 214.2Z" fill="#8a008a" stroke="#8a008a" stroke-width="1"/><path d="M686.8 214.2L668.6 215.9L668.4 231.9L686.7 230.5Z" fill="#7a007a" stroke="#7a007a" stroke-width="1"/><path d="M686.7 230.5L668.4 231.9L668.3 249.5L686.7 248.6Z" fill="#670067" stroke="#670067" stroke-width="1"/><path d="M686.7 248.6L668.3 249.5L668.3 268.2L686.7 267.8Z" fill="#710b71" stroke="#710b71" stroke-width="1"/><path d="M686.7 267.8L668.3 268.2L668.3 287.3L686.7 287.4Z" fill="#a037a0" stroke="#a037a0" stroke-width="1"/><path d="M686.7 287.4L668.3 287.3L668.4 306.4L686.7 306.9Z" fill="#9a2c9a" stroke="#9a2c9a" stroke-width="1"/><path d="M686.7 306.9L668.4 306.4L668.6 324.6L686.8 325.6Z" fill="#8b058b" stroke="#8b058b" stroke-width="1"/><path d="M686.8 325.6L668.6 324.6L668.8 341.5L686.9 342.9Z" fill="#9b009b" stroke="#9b009b" stroke-width="1"/><path d="M686.9 342.9L668.8 341.5L669.1 356.5L687.0 358.3Z" fill="#af00af" stroke="#af00af" stroke-width="1"/><path d="M687.0 358.3L669.1 356.5L669.5 369.3L687.1 371.4Z" fill="#bf00bf" stroke="#bf00bf" stroke-width="1"/><path d="M687.1 371.4L669.5 369.3L669.9 379.6L687.2 381.8Z" fill="#cb00cb" stroke="#cb00cb" stroke-width="1"/><path d="M687.2 381.8L669.9 379.6L670.3 387.1L687.4 389.6Z" fill="#d200d2" stroke="#d200d2" stroke-width="1"/><path d="M687.4 389.6L670.3 387.1L670.7 391.9L687.5 394.4Z" fill="#d300d3" stroke="#d300d3" stroke-width="1"/><path d="M687.5 394.4L670.7 391.9L671.1 393.9L687.6 396.4Z" fill="#d000d0" stroke="#d000d0" stroke-width="1"/><path d="M670.4 173.6L654.0 178.8L653.3 181.5L670.0 176.4Z" fill="#b400b4" stroke="#b400b4" stroke-width="1"/><path d="M670.0 176.4L653.3 181.5L652.7 187.0L669.6 182.1Z" fill="#b100b1" stroke="#b100b1" stroke-width="1"/><path d="M669.6 182.1L652.7 187.0L652.2 195.3L669.2 190.7Z" fill="#aa00aa" stroke="#aa00aa" stroke-width="1"/><path d="M669.2 190.7L652.2 195.3L651.7 206.1L668.9 202.1Z" fill="#a000a0" stroke="#a000a0" stroke-width="1"/><path d="M668.9 202.1L651.7 206.1L651.3 219.3L668.6 215.9Z" fill="#930093" stroke="#930093" stroke-width="1"/><path d="M668.6 215.9L651.3 219.3L651.0 234.5L668.4 231.9Z" fill="#840084" stroke="#840084" stroke-width="1"/><path d="M668.4 231.9L651.0 234.5L650.8 251.3L668.3 249.5Z" fill="#720072" stroke="#720072" stroke-width="1"/><path d="M668.3 249.5L650.8 251.3L650.7 269.0L668.3 268.2Z" fill="#740174" stroke="#740174" stroke-width="1"/><path d="M668.3 268.2L650.7 269.0L650.8 287.2L668.3 287.3Z" fill="#7b047b" stroke="#7b047b" stroke-width="1"/><path d="M668.3 287.3L650.8 287.2L650.9 305.3L668.4 306.4Z" fill="#810381" stroke="#810381" stroke-width="1"/><path d="M668.4 306.4L650.9 305.3L651.2 322.6L668.6 324.6Z" fill="#980098" stroke="#980098" stroke-width="1"/><path d="M668.6 324.6L651.2 322.6L651.6 338.7L668.8 341.5Z" fill="#af00af" stroke="#af00af" stroke-width="1"/><path d="M668.8 341.5L651.6 338.7L652.1 353.0L669.1 356.5Z" fill="#c300c3" stroke="#c300c3" stroke-width="1"/><path d="M669.1 356.5L652.1 353.0L652.6 365.2L669.5 369.3Z" fill="#d200d2" stroke="#d200d2" stroke-width="1"/><path d="M669.5 369.3L652.6 365.2L653.2 375.1L669.9 379.6Z" fill="#de00de" stroke="#de00de" stroke-width="1"/><path d="M669.9 379.6L653.2 375.1L653.8 382.4L670.3 387.1Z" fill="#e400e4" stroke="#e400e4" stroke-width="1"/><path d="M670.3 387.1L653.8 382.4L654.5 387.0L670.7 391.9Z" fill="#e600e6" stroke="#e600e6" stroke-width="1"/><path d="M670.7 391.9L654.5 387.0L655.1 388.9L671.1 393.9Z" fill="#e300e3" stroke="#e300e3" stroke-width="1"/><path d="M654.0 178.8L638.6 186.4L637.8 189.0L653.3 181.5Z" fill="#c400c4" stroke="#c400c4" stroke-width="1"/><path d="M653.3 181.5L637.8 189.0L637.0 194.2L652.7 187.0Z" fill="#c000c0" stroke="#c000c0" stroke-width="1"/><path d="M652.7 187.0L637.0 194.2L636.3 201.9L652.2 195.3Z" fill="#ba00ba" stroke="#ba00ba" stroke-width="1"/><path d="M652.2 195.3L636.3 201.9L635.7 212.1L651.7 206.1Z" fill="#b000b0" stroke="#b000b0" stroke-width="1"/><path d="M651.7 206.1L635.7 212.1L635.2 224.3L651.3 219.3Z" fill="#a400a4" stroke="#a400a4" stroke-width="1"/><path d="M651.3 219.3L635.2 224.3L634.8 238.4L651.0 234.5Z" fill="#960096" stroke="#960096" stroke-width="1"/><path d="M651.0 234.5L634.8 238.4L634.6 253.8L650.8 251.3Z" fill="#850085" stroke="#850085" stroke-width="1"/><path d="M650.8 251.3L634.6 253.8L634.5 270.2L650.7 269.0Z" fill="#860086" stroke="#860086" stroke-width="1"/><path d="M650.7 269.0L634.5 270.2L634.5 287.1L650.8 287.2Z" fill="#8b008b" stroke="#8b008b" stroke-width="1"/><path d="M650.8 287.2L634.5 287.1L634.8 303.7L650.9 305.3Z" fill="#900090" stroke="#900090" stroke-width="1"/><path d="M650.9 305.3L634.8 303.7L635.1 319.8L651.2 322.6Z" fill="#a900a9" stroke="#a900a9" stroke-width="1"/><path d="M651.2 322.6L635.1 319.8L635.6 334.6L651.6 338.7Z" fill="#bf00bf" stroke="#bf00bf" stroke-width="1"/><path d="M651.6 338.7L635.6 334.6L636.2 347.9L652.1 353.0Z" fill="#d100d1" stroke="#d100d1" stroke-width="1"/><path d="M652.1 353.0L636.2 347.9L636.9 359.3L652.6 365.2Z" fill="#e000e0" stroke="#e000e0" stroke-width="1"/><path d="M652.6 365.2L636.9 359.3L637.6 368.5L653.2 375.1Z" fill="#eb00eb" stroke="#eb00eb" stroke-width="1"/><path d="M653.2 375.1L637.6 368.5L638.4 375.4L653.8 382.4Z" fill="#f100f1" stroke="#f100f1" stroke-width="1"/><path d="M653.8 382.4L638.4 375.4L639.2 379.8L654.5 387.0Z" fill="#f300f3" stroke="#f300f3" stroke-width="1"/><path d="M654.5 387.0L639.2 379.8L640.0 381.7L655.1 388.9Z" fill="#f100f1" stroke="#f100f1" stroke-width="1"/><path d="M638.6 186.4L624.6 196.2L623.7 198.7L637.8 189.0Z" fill="#ce00ce" stroke="#ce00ce" stroke-width="1"/><path d="M637.8 189.0L623.7 198.7L622.9 203.5L637.0 194.2Z" fill="#cb00cb" stroke="#cb00cb" stroke-width="1"/><path d="M637.0 194.2L622.9 203.5L622.1 210.5L636.3 201.9Z" fill="#c500c5" stroke="#c500c5" stroke-width="1"/><path d="M636.3 201.9L622.1 210.5L621.4 219.6L635.7 212.1Z" fill="#bd00bd" stroke="#bd00bd" stroke-width="1"/><path d="M635.7 212.1L621.4 219.6L620.8 230.7L635.2 224.3Z" fill="#b100b1" stroke="#b100b1" stroke-width="1"/><path d="M635.2 224.3L620.8 230.7L620.4 243.3L634.8 238.4Z" fill="#a400a4" stroke="#a400a4" stroke-width="1"/><path d="M634.8 238.4L620.4 243.3L620.1 257.1L634.6 253.8Z" fill="#940094" stroke="#940094" stroke-width="1"/><path d="M634.6 253.8L620.1 257.1L620.0 271.8L634.5 270.2Z" fill="#970097" stroke="#970097" stroke-width="1"/><path d="M634.5 270.2L620.0 271.8L620.1 286.8L634.5 287.1Z" fill="#9b009b" stroke="#9b009b" stroke-width="1"/><path d="M634.5 287.1L620.1 286.8L620.3 301.8L634.8 303.7Z" fill="#9f009f" stroke="#9f009f" stroke-width="1"/><path d="M634.8 303.7L620.3 301.8L620.7 316.1L635.1 319.8Z" fill="#b600b6" stroke="#b600b6" stroke-width="1"/><path d="M635.1 319.8L620.7 316.1L621.3 329.5L635.6 334.6Z" fill="#ca00ca" stroke="#ca00ca" stroke-width="1"/><path d="M635.6 334.6L621.3 329.5L621.9 341.4L636.2 347.9Z" fill="#db00db" stroke="#db00db" stroke-width="1"/><path d="M636.2 347.9L621.9 341.4L622.7 351.7L636.9 359.3Z" fill="#e900e9" stroke="#e900e9" stroke-width="1"/><path d="M636.9 359.3L622.7 351.7L623.5 360.1L637.6 368.5Z" fill="#f300f3" stroke="#f300f3" stroke-width="1"/><path d="M637.6 368.5L623.5 360.1L624.4 366.3L638.4 375.4Z" fill="#f900f9" stroke="#f900f9" stroke-width="1"/><path d="M638.4 375.4L624.4 366.3L625.3 370.4L639.2 379.8Z" fill="#fa00fa" stroke="#fa00fa" stroke-width="1"/><path d="M639.2 379.8L625.3 370.4L626.2 372.3L640.0 381.7Z" fill="#f800f8" stroke="#f800f8" stroke-width="1"/><path d="M624.6 196.2L612.3 208.0L611.4 210.3L623.7 198.7Z" fill="#d400d4" stroke="#d400d4" stroke-width="1"/><path d="M623.7 198.7L611.4 210.3L610.6 214.5L622.9 203.5Z" fill="#d100d1" stroke="#d100d1" stroke-width="1"/><path d="M622.9 203.5L610.6 214.5L609.8 220.7L622.1 210.5Z" fill="#cc00cc" stroke="#cc00cc" stroke-width="1"/><path d="M622.1 210.5L609.8 220.7L609.1 228.7L621.4 219.6Z" fill="#c400c4" stroke="#c400c4" stroke-width="1"/><path d="M621.4 219.6L609.1 228.7L608.5 238.2L620.8 230.7Z" fill="#ba00ba" stroke="#ba00ba" stroke-width="1"/><path d="M620.8 230.7L608.5 238.2L608.1 249.1L620.4 243.3Z" fill="#ae00ae" stroke="#ae00ae" stroke-width="1"/><path d="M620.4 243.3L608.1 249.1L607.8 261.0L620.1 257.1Z" fill="#a000a0" stroke="#a000a0" stroke-width="1"/><path d="M620.1 257.1L607.8 261.0L607.7 273.6L620.0 271.8Z" fill="#a400a4" stroke="#a400a4" stroke-width="1"/><path d="M620.0 271.8L607.7 273.6L607.8 286.6L620.1 286.8Z" fill="#a700a7" stroke="#a700a7" stroke-width="1"/><path d="M620.1 286.8L607.8 286.6L608.0 299.4L620.3 301.8Z" fill="#aa00aa" stroke="#aa00aa" stroke-width="1"/><path d="M620.3 301.8L608.0 299.4L608.4 311.8L620.7 316.1Z" fill="#be00be" stroke="#be00be" stroke-width="1"/><path d="M620.7 316.1L608.4 311.8L608.9 323.3L621.3 329.5Z" fill="#d000d0" stroke="#d000d0" stroke-width="1"/><path d="M621.3 329.5L608.9 323.3L609.6 333.7L621.9 341.4Z" fill="#df00df" stroke="#df00df" stroke-width="1"/><path d="M621.9 341.4L609.6 333.7L610.4 342.6L622.7 351.7Z" fill="#ec00ec" stroke="#ec00ec" stroke-width="1"/><path d="M622.7 351.7L610.4 342.6L611.2 350.0L623.5 360.1Z" fill="#f400f4" stroke="#f400f4" stroke-width="1"/><path d="M623.5 360.1L611.2 350.0L612.1 355.5L624.4 366.3Z" fill="#fa00fa" stroke="#fa00fa" stroke-width="1"/><path d="M624.4 366.3L612.1 355.5L613.0 359.2L625.3 370.4Z" fill="#fb00fb" stroke="#fb00fb" stroke-width="1"/><path d="M625.3 370.4L613.0 359.2L614.0 360.9L626.2 372.3Z" fill="#f900f9" stroke="#f900f9" stroke-width="1"/><path d="M612.3 208.0L602.0 221.4L601.2 223.4L611.4 210.3Z" fill="#d500d5" stroke="#d500d5" stroke-width="1"/><path d="M611.4 210.3L601.2 223.4L600.4 227.1L610.6 214.5Z" fill="#d200d2" stroke="#d200d2" stroke-width="1"/><path d="M610.6 214.5L600.4 227.1L599.7 232.2L609.8 220.7Z" fill="#ce00ce" stroke="#ce00ce" stroke-width="1"/><path d="M609.8 220.7L599.7 232.2L599.0 238.8L609.1 228.7Z" fill="#c700c7" stroke="#c700c7" stroke-width="1"/><path d="M609.1 228.7L599.0 238.8L598.5 246.7L608.5 238.2Z" fill="#bf00bf" stroke="#bf00bf" stroke-width="1"/><path d="M608.5 238.2L598.5 246.7L598.1 255.6L608.1 249.1Z" fill="#b400b4" stroke="#b400b4" stroke-width="1"/><path d="M608.1 249.1L598.1 255.6L597.9 265.4L607.8 261.0Z" fill="#a900a9" stroke="#a900a9" stroke-width="1"/><path d="M607.8 261.0L597.9 265.4L597.8 275.7L607.7 273.6Z" fill="#ad00ad" stroke="#ad00ad" stroke-width="1"/><path d="M607.7 273.6L597.8 275.7L597.9 286.3L607.8 286.6Z" fill="#b000b0" stroke="#b000b0" stroke-width="1"/><path d="M607.8 286.6L597.9 286.3L598.1 296.8L608.0 299.4Z" fill="#b100b1" stroke="#b100b1" stroke-width="1"/><path d="M608.0 299.4L598.1 296.8L598.4 306.9L608.4 311.8Z" fill="#c200c2" stroke="#c200c2" stroke-width="1"/><path d="M608.4 311.8L598.4 306.9L598.9 316.4L608.9 323.3Z" fill="#d100d1" stroke="#d100d1" stroke-width="1"/><path d="M608.9 323.3L598.9 316.4L599.5 324.9L609.6 333.7Z" fill="#de00de" stroke="#de00de" stroke-width="1"/><path d="M609.6 333.7L599.5 324.9L600.2 332.4L610.4 342.6Z" fill="#e900e9" stroke="#e900e9" stroke-width="1"/><path d="M610.4 342.6L600.2 332.4L601.0 338.5L611.2 350.0Z" fill="#f000f0" stroke="#f000f0" stroke-width="1"/><path d="M611.2 350.0L601.0 338.5L601.8 343.1L612.1 355.5Z" fill="#f500f5" stroke="#f500f5" stroke-width="1"/><path d="M612.1 355.5L601.8 343.1L602.7 346.3L613.0 359.2Z" fill="#f600f6" stroke="#f600f6" stroke-width="1"/><path d="M613.0 359.2L602.7 346.3L603.6 347.8L614.0 360.9Z" fill="#f500f5" stroke="#f500f5" stroke-width="1"/><path d="M602.0 221.4L593.9 236.2L593.2 237.9L601.2 223.4Z" fill="#d000d0" stroke="#d000d0" stroke-width="1"/><path d="M601.2 223.4L593.2 237.9L592.6 240.7L600.4 227.1Z" fill="#ce00ce" stroke="#ce00ce" stroke-width="1"/><path d="M600.4 227.1L592.6 240.7L592.0 244.7L599.7 232.2Z" fill="#cb00cb" stroke="#cb00cb" stroke-width="1"/><path d="M599.7 232.2L592.0 244.7L591.5 249.8L599.0 238.8Z" fill="#c500c5" stroke="#c500c5" stroke-width="1"/><path d="M599.0 238.8L591.5 249.8L591.1 255.9L598.5 246.7Z" fill="#be00be" stroke="#be00be" stroke-width="1"/><path d="M598.5 246.7L591.1 255.9L590.7 262.7L598.1 255.6Z" fill="#b600b6" stroke="#b600b6" stroke-width="1"/><path d="M598.1 255.6L590.7 262.7L590.5 270.1L597.9 265.4Z" fill="#af00af" stroke="#af00af" stroke-width="1"/><path d="M597.9 265.4L590.5 270.1L590.5 277.9L597.8 275.7Z" fill="#b200b2" stroke="#b200b2" stroke-width="1"/><path d="M597.8 275.7L590.5 277.9L590.5 286.0L597.9 286.3Z" fill="#b500b5" stroke="#b500b5" stroke-width="1"/><path d="M597.9 286.3L590.5 286.0L590.7 293.9L598.1 296.8Z" fill="#b600b6" stroke="#b600b6" stroke-width="1"/><path d="M598.1 296.8L590.7 293.9L591.0 301.7L598.4 306.9Z" fill="#c100c1" stroke="#c100c1" stroke-width="1"/><path d="M598.4 306.9L591.0 301.7L591.4 308.9L598.9 316.4Z" fill="#cd00cd" stroke="#cd00cd" stroke-width="1"/><path d="M598.9 316.4L591.4 308.9L591.9 315.4L599.5 324.9Z" fill="#d800d8" stroke="#d800d8" stroke-width="1"/><path d="M599.5 324.9L591.9 315.4L592.5 321.2L600.2 332.4Z" fill="#e000e0" stroke="#e000e0" stroke-width="1"/><path d="M600.2 332.4L592.5 321.2L593.1 325.9L601.0 338.5Z" fill="#e700e7" stroke="#e700e7" stroke-width="1"/><path d="M601.0 338.5L593.1 325.9L593.8 329.6L601.8 343.1Z" fill="#ea00ea" stroke="#ea00ea" stroke-width="1"/><path d="M601.8 343.1L593.8 329.6L594.5 332.1L602.7 346.3Z" fill="#eb00eb" stroke="#eb00eb" stroke-width="1"/><path d="M602.7 346.3L594.5 332.1L595.2 333.4L603.6 347.8Z" fill="#ea00ea" stroke="#ea00ea" stroke-width="1"/><path d="M593.2 237.9L587.7 253.2L587.3 255.2L592.6 240.7Z" fill="#c500c5" stroke="#c500c5" stroke-width="1"/><path d="M592.6 240.7L587.3 255.2L586.8 257.9L592.0 244.7Z" fill="#c200c2" stroke="#c200c2" stroke-width="1"/><path d="M592.0 244.7L586.8 257.9L586.5 261.4L591.5 249.8Z" fill="#be00be" stroke="#be00be" stroke-width="1"/><path d="M591.5 249.8L586.5 261.4L586.2 265.5L591.1 255.9Z" fill="#b900b9" stroke="#b900b9" stroke-width="1"/><path d="M591.1 255.9L586.2 265.5L586.0 270.0L590.7 262.7Z" fill="#b300b3" stroke="#b300b3" stroke-width="1"/><path d="M590.7 262.7L586.0 270.0L585.8 275.0L590.5 270.1Z" fill="#b100b1" stroke="#b100b1" stroke-width="1"/><path d="M590.5 270.1L585.8 275.0L585.8 280.3L590.5 277.9Z" fill="#b400b4" stroke="#b400b4" stroke-width="1"/><path d="M590.5 277.9L585.8 280.3L585.8 285.6L590.5 286.0Z" fill="#b500b5" stroke="#b500b5" stroke-width="1"/><path d="M590.5 286.0L585.8 285.6L585.9 291.0L590.7 293.9Z" fill="#b600b6" stroke="#b600b6" stroke-width="1"/><path d="M590.7 293.9L585.9 291.0L586.1 296.1L591.0 301.7Z" fill="#bc00bc" stroke="#bc00bc" stroke-width="1"/><path d="M591.0 301.7L586.1 296.1L586.4 301.0L591.4 308.9Z" fill="#c500c5" stroke="#c500c5" stroke-width="1"/><path d="M591.4 308.9L586.4 301.0L586.8 305.4L591.9 315.4Z" fill="#cc00cc" stroke="#cc00cc" stroke-width="1"/><path d="M591.9 315.4L586.8 305.4L587.2 309.3L592.5 321.2Z" fill="#d300d3" stroke="#d300d3" stroke-width="1"/><path d="M592.5 321.2L587.2 309.3L587.6 312.6L593.1 325.9Z" fill="#d700d7" stroke="#d700d7" stroke-width="1"/><path d="M593.1 325.9L587.6 312.6L588.1 315.1L593.8 329.6Z" fill="#da00da" stroke="#da00da" stroke-width="1"/><path d="M593.8 329.6L588.1 315.1L588.6 316.9L594.5 332.1Z" fill="#db00db" stroke="#db00db" stroke-width="1"/><path d="M587.3 255.2L584.5 270.0L584.3 271.4L586.8 257.9Z" fill="#b500b5" stroke="#b500b5" stroke-width="1"/><path d="M586.8 257.9L584.3 271.4L584.1 273.2L586.5 261.4Z" fill="#b300b3" stroke="#b300b3" stroke-width="1"/><path d="M586.5 261.4L584.1 273.2L583.9 275.2L586.2 265.5Z" fill="#b000b0" stroke="#b000b0" stroke-width="1"/><path d="M586.2 265.5L583.9 275.2L583.8 277.5L586.0 270.0Z" fill="#ad00ad" stroke="#ad00ad" stroke-width="1"/><path d="M586.0 270.0L583.8 277.5L583.8 280.0L585.8 275.0Z" fill="#af00af" stroke="#af00af" stroke-width="1"/><path d="M585.8 275.0L583.8 280.0L583.7 282.6L585.8 280.3Z" fill="#b100b1" stroke="#b100b1" stroke-width="1"/><path d="M585.8 280.3L583.7 282.6L583.7 285.3L585.8 285.6Z" fill="#b200b2" stroke="#b200b2" stroke-width="1"/><path d="M585.8 285.6L583.7 285.3L583.8 288.0L585.9 291.0Z" fill="#b200b2" stroke="#b200b2" stroke-width="1"/><path d="M585.9 291.0L583.8 288.0L583.9 290.5L586.1 296.1Z" fill="#b200b2" stroke="#b200b2" stroke-width="1"/><path d="M586.1 296.1L583.9 290.5L584.0 293.0L586.4 301.0Z" fill="#b700b7" stroke="#b700b7" stroke-width="1"/><path d="M586.4 301.0L584.0 293.0L584.2 295.2L586.8 305.4Z" fill="#bc00bc" stroke="#bc00bc" stroke-width="1"/><path d="M586.8 305.4L584.2 295.2L584.4 297.2L587.2 309.3Z" fill="#c000c0" stroke="#c000c0" stroke-width="1"/><path d="M587.2 309.3L584.4 297.2L584.7 298.8L587.6 312.6Z" fill="#c300c3" stroke="#c300c3" stroke-width="1"/><path d="M587.6 312.6L584.7 298.8L584.9 300.1L588.1 315.1Z" fill="#c400c4" stroke="#c400c4" stroke-width="1"/><path d="M846.0 395.9L833.7 380.2L836.3 384.0L848.5 399.5Z" fill="#e200e2" stroke="#e200e2" stroke-width="1"/><path d="M848.5 399.5L836.3 384.0L838.8 391.1L850.9 405.9Z" fill="#e100e1" stroke="#e100e1" stroke-width="1"/><path d="M850.9 405.9L838.8 391.1L841.3 401.4L853.2 415.2Z" fill="#dd00dd" stroke="#dd00dd" stroke-width="1"/><path d="M853.2 415.2L841.3 401.4L843.6 414.9L855.4 427.0Z" fill="#d600d6" stroke="#d600d6" stroke-width="1"/><path d="M855.4 427.0L843.6 414.9L845.6 431.3L857.3 441.3Z" fill="#cd00cd" stroke="#cd00cd" stroke-width="1"/><path d="M857.3 441.3L845.6 431.3L847.3 450.1L858.8 457.6Z" fill="#c100c1" stroke="#c100c1" stroke-width="1"/><path d="M858.8 457.6L847.3 450.1L848.6 470.8L860.0 475.5Z" fill="#b300b3" stroke="#b300b3" stroke-width="1"/><path d="M860.0 475.5L848.6 470.8L849.4 492.7L860.8 494.4Z" fill="#a600a6" stroke="#a600a6" stroke-width="1"/><path d="M860.8 494.4L849.4 492.7L849.7 515.1L861.0 513.7Z" fill="#a600a6" stroke="#a600a6" stroke-width="1"/><path d="M861.0 513.7L849.7 515.1L849.5 537.3L860.9 532.8Z" fill="#a400a4" stroke="#a400a4" stroke-width="1"/><path d="M860.9 532.8L849.5 537.3L848.8 558.4L860.2 551.1Z" fill="#a100a1" stroke="#a100a1" stroke-width="1"/><path d="M860.2 551.1L848.8 558.4L847.6 577.9L859.1 567.9Z" fill="#a200a2" stroke="#a200a2" stroke-width="1"/><path d="M859.1 567.9L847.6 577.9L846.0 594.9L857.6 582.7Z" fill="#ad00ad" stroke="#ad00ad" stroke-width="1"/><path d="M857.6 582.7L846.0 594.9L844.1 609.2L855.8 595.2Z" fill="#b700b7" stroke="#b700b7" stroke-width="1"/><path d="M855.8 595.2L844.1 609.2L841.8 620.3L853.7 605.0Z" fill="#be00be" stroke="#be00be" stroke-width="1"/><path d="M853.7 605.0L841.8 620.3L839.4 628.1L851.5 612.0Z" fill="#c400c4" stroke="#c400c4" stroke-width="1"/><path d="M851.5 612.0L839.4 628.1L836.8 632.4L849.0 616.0Z" fill="#c700c7" stroke="#c700c7" stroke-width="1"/><path d="M833.7 380.2L813.4 361.1L816.0 365.1L836.3 384.0Z" fill="#e600e6" stroke="#e600e6" stroke-width="1"/><path d="M836.3 384.0L816.0 365.1L818.5 372.9L838.8 391.1Z" fill="#e500e5" stroke="#e500e5" stroke-width="1"/><path d="M838.8 391.1L818.5 372.9L821.0 384.6L841.3 401.4Z" fill="#e000e0" stroke="#e000e0" stroke-width="1"/><path d="M841.3 401.4L821.0 384.6L823.2 400.0L843.6 414.9Z" fill="#d900d9" stroke="#d900d9" stroke-width="1"/><path d="M843.6 414.9L823.2 400.0L825.3 418.9L845.6 431.3Z" fill="#ce00ce" stroke="#ce00ce" stroke-width="1"/><path d="M845.6 431.3L825.3 418.9L827.0 440.7L847.3 450.1Z" fill="#c000c0" stroke="#c000c0" stroke-width="1"/><path d="M847.3 450.1L827.0 440.7L828.3 464.9L848.6 470.8Z" fill="#af00af" stroke="#af00af" stroke-width="1"/><path d="M848.6 470.8L828.3 464.9L829.1 490.5L849.4 492.7Z" fill="#9e009e" stroke="#9e009e" stroke-width="1"/><path d="M849.4 492.7L829.1 490.5L829.4 516.9L849.7 515.1Z" fill="#9e009e" stroke="#9e009e" stroke-width="1"/><path d="M849.7 515.1L829.4 516.9L829.2 542.9L849.5 537.3Z" fill="#9b009b" stroke="#9b009b" stroke-width="1"/><path d="M849.5 537.3L829.2 542.9L828.5 567.6L848.8 558.4Z" fill="#970097" stroke="#970097" stroke-width="1"/><path d="M848.8 558.4L828.5 567.6L827.3 590.3L847.6 577.9Z" fill="#9c009c" stroke="#9c009c" stroke-width="1"/><path d="M847.6 577.9L827.3 590.3L825.7 610.1L846.0 594.9Z" fill="#a900a9" stroke="#a900a9" stroke-width="1"/><path d="M846.0 594.9L825.7 610.1L823.7 626.5L844.1 609.2Z" fill="#b400b4" stroke="#b400b4" stroke-width="1"/><path d="M844.1 609.2L823.7 626.5L821.5 639.1L841.8 620.3Z" fill="#bd00bd" stroke="#bd00bd" stroke-width="1"/><path d="M841.8 620.3L821.5 639.1L819.1 647.7L839.4 628.1Z" fill="#c300c3" stroke="#c300c3" stroke-width="1"/><path d="M839.4 628.1L819.1 647.7L816.5 652.3L836.8 632.4Z" fill="#c700c7" stroke="#c700c7" stroke-width="1"/><path d="M813.4 361.1L806.1 356.1L800.7 354.8L816.0 365.1Z" fill="#e400e4" stroke="#e400e4" stroke-width="1"/><path d="M816.0 365.1L800.7 354.8L793.9 353.9L794.9 357.7L818.5 372.9Z" fill="#e300e3" stroke="#e300e3" stroke-width="1"/><path d="M818.5 372.9L794.9 357.7L797.1 370.4L821.0 384.6Z" fill="#de00de" stroke="#de00de" stroke-width="1"/><path d="M821.0 384.6L797.1 370.4L799.2 387.4L823.2 400.0Z" fill="#d500d5" stroke="#d500d5" stroke-width="1"/><path d="M823.2 400.0L799.2 387.4L801.1 408.3L825.3 418.9Z" fill="#c900c9" stroke="#c900c9" stroke-width="1"/><path d="M825.3 418.9L801.1 408.3L802.6 432.7L827.0 440.7Z" fill="#ba00ba" stroke="#ba00ba" stroke-width="1"/><path d="M827.0 440.7L802.6 432.7L803.4 450.6L809.5 461.0L828.3 464.9Z" fill="#a700a7" stroke="#a700a7" stroke-width="1"/><path d="M828.3 464.9L809.5 461.0L820.1 489.9L829.1 490.5Z" fill="#920092" stroke="#920092" stroke-width="1"/><path d="M829.1 490.5L820.1 489.9L824.0 517.2L829.4 516.9Z" fill="#920092" stroke="#920092" stroke-width="1"/><path d="M829.4 516.9L824.0 517.2L821.5 544.3L829.2 542.9Z" fill="#8f008f" stroke="#8f008f" stroke-width="1"/><path d="M829.2 542.9L821.5 544.3L812.5 572.7L828.5 567.6Z" fill="#8a008a" stroke="#8a008a" stroke-width="1"/><path d="M828.5 567.6L812.5 572.7L803.4 589.6L802.9 600.9L827.3 590.3Z" fill="#920092" stroke="#920092" stroke-width="1"/><path d="M827.3 590.3L802.9 600.9L801.4 623.0L825.7 610.1Z" fill="#a000a0" stroke="#a000a0" stroke-width="1"/><path d="M825.7 610.1L801.4 623.0L799.6 641.1L823.7 626.5Z" fill="#ac00ac" stroke="#ac00ac" stroke-width="1"/><path d="M823.7 626.5L799.6 641.1L797.6 654.9L821.5 639.1Z" fill="#b600b6" stroke="#b600b6" stroke-width="1"/><path d="M821.5 639.1L797.6 654.9L795.4 664.2L819.1 647.7Z" fill="#be00be" stroke="#be00be" stroke-width="1"/><path d="M819.1 647.7L795.4 664.2L793.9 667.4L798.5 665.1L816.5 652.3Z" fill="#c200c2" stroke="#c200c2" stroke-width="1"/><path d="M785.0 353.2L794.9 357.7L793.9 353.9Z" fill="#dc00dc" stroke="#dc00dc" stroke-width="1"/><path d="M794.9 357.7L785.0 353.2L769.5 352.3L770.4 359.3L797.1 370.4Z" fill="#d600d6" stroke="#d600d6" stroke-width="1"/><path d="M797.1 370.4L770.4 359.3L772.1 377.5L799.2 387.4Z" fill="#cd00cd" stroke="#cd00cd" stroke-width="1"/><path d="M799.2 387.4L772.1 377.5L773.6 400.0L801.1 408.3Z" fill="#c000c0" stroke="#c000c0" stroke-width="1"/><path d="M801.1 408.3L773.6 400.0L774.5 419.1L785.3 428.8L802.6 432.7Z" fill="#af00af" stroke="#af00af" stroke-width="1"/><path d="M802.6 432.7L785.3 428.8L803.4 450.6Z" fill="#9b009b" stroke="#9b009b" stroke-width="1"/><path d="M792.4 604.0L802.9 600.9L803.4 589.6Z" fill="#840084" stroke="#840084" stroke-width="1"/><path d="M802.9 600.9L792.4 604.0L774.5 621.0L773.9 633.1L801.4 623.0Z" fill="#930093" stroke="#930093" stroke-width="1"/><path d="M801.4 623.0L773.9 633.1L772.4 652.7L799.6 641.1Z" fill="#a000a0" stroke="#a000a0" stroke-width="1"/><path d="M799.6 641.1L772.4 652.7L770.8 667.4L797.6 654.9Z" fill="#ab00ab" stroke="#ab00ab" stroke-width="1"/><path d="M797.6 654.9L770.8 667.4L769.5 674.5L778.9 672.3L795.4 664.2Z" fill="#b300b3" stroke="#b300b3" stroke-width="1"/><path d="M795.4 664.2L778.9 672.3L793.9 667.4Z" fill="#b800b8" stroke="#b800b8" stroke-width="1"/><path d="M741.5 351.3L741.6 351.7L770.4 359.3L769.5 352.3Z" fill="#c900c9" stroke="#c900c9" stroke-width="1"/><path d="M770.4 359.3L741.6 351.7L742.6 370.6L772.1 377.5Z" fill="#bf00bf" stroke="#bf00bf" stroke-width="1"/><path d="M772.1 377.5L742.6 370.6L743.6 394.3L773.6 400.0Z" fill="#b100b1" stroke="#b100b1" stroke-width="1"/><path d="M773.6 400.0L743.6 394.3L743.8 401.6L774.5 419.1Z" fill="#a000a0" stroke="#a000a0" stroke-width="1"/><path d="M743.8 639.6L743.8 640.2L773.9 633.1L774.5 621.0Z" fill="#830083" stroke="#830083" stroke-width="1"/><path d="M773.9 633.1L743.8 640.2L742.8 660.6L772.4 652.7Z" fill="#900090" stroke="#900090" stroke-width="1"/><path d="M772.4 652.7L742.8 660.6L741.8 675.9L770.8 667.4Z" fill="#9c009c" stroke="#9c009c" stroke-width="1"/><path d="M770.8 667.4L741.8 675.9L741.5 678.7L769.5 674.5Z" fill="#a400a4" stroke="#a400a4" stroke-width="1"/><path d="M738.4 351.2L741.6 351.7L741.5 351.3Z" fill="#b600b6" stroke="#b600b6" stroke-width="1"/><path d="M741.6 351.7L738.4 351.2L711.4 350.9L711.7 367.1L742.6 370.6Z" fill="#ac00ac" stroke="#ac00ac" stroke-width="1"/><path d="M742.6 370.6L711.7 367.1L712.0 391.3L743.6 394.3Z" fill="#a200a2" stroke="#a200a2" stroke-width="1"/><path d="M743.6 394.3L712.0 391.3L712.0 392.7L743.8 401.6Z" fill="#940094" stroke="#940094" stroke-width="1"/><path d="M740.5 640.6L743.8 640.2L743.8 639.6Z" fill="#7f007f" stroke="#7f007f" stroke-width="1"/><path d="M743.8 640.2L740.5 640.6L712.0 647.3L711.8 664.7L742.8 660.6Z" fill="#8c008c" stroke="#8c008c" stroke-width="1"/><path d="M742.8 660.6L711.8 664.7L711.4 680.3L741.8 675.9Z" fill="#960096" stroke="#960096" stroke-width="1"/><path d="M741.8 675.9L711.4 680.3L711.4 680.8L741.5 678.7Z" fill="#9c009c" stroke="#9c009c" stroke-width="1"/><path d="M680.6 350.9L680.3 367.1L711.7 367.1L711.4 350.9Z" fill="#af00af" stroke="#af00af" stroke-width="1"/><path d="M711.7 367.1L680.3 367.1L680.0 391.3L712.0 391.3Z" fill="#a500a5" stroke="#a500a5" stroke-width="1"/><path d="M712.0 391.3L680.0 391.3L680.0 392.7L712.0 392.7Z" fill="#960096" stroke="#960096" stroke-width="1"/><path d="M680.0 647.3L680.2 664.7L711.8 664.7L712.0 647.3Z" fill="#8e008e" stroke="#8e008e" stroke-width="1"/><path d="M711.8 664.7L680.2 664.7L680.6 680.3L711.4 680.3Z" fill="#980098" stroke="#980098" stroke-width="1"/><path d="M711.4 680.3L680.6 680.3L680.6 680.8L711.4 680.8Z" fill="#9f009f" stroke="#9f009f" stroke-width="1"/><path d="M650.5 351.3L650.4 351.7L653.6 351.2Z" fill="#b600b6" stroke="#b600b6" stroke-width="1"/><path d="M653.6 351.2L650.4 351.7L649.4 370.6L680.3 367.1L680.6 350.9Z" fill="#ac00ac" stroke="#ac00ac" stroke-width="1"/><path d="M680.3 367.1L649.4 370.6L648.4 394.3L680.0 391.3Z" fill="#a200a2" stroke="#a200a2" stroke-width="1"/><path d="M680.0 391.3L648.4 394.3L648.2 401.6L680.0 392.7Z" fill="#940094" stroke="#940094" stroke-width="1"/><path d="M648.2 639.6L648.2 640.2L651.5 640.6Z" fill="#7f007f" stroke="#7f007f" stroke-width="1"/><path d="M651.5 640.6L648.2 640.2L649.2 660.6L680.2 664.7L680.0 647.3Z" fill="#8c008c" stroke="#8c008c" stroke-width="1"/><path d="M680.2 664.7L649.2 660.6L650.2 675.9L680.6 680.3Z" fill="#960096" stroke="#960096" stroke-width="1"/><path d="M680.6 680.3L650.2 675.9L650.5 678.7L680.6 680.8Z" fill="#9c009c" stroke="#9c009c" stroke-width="1"/><path d="M622.5 352.3L621.6 359.3L650.4 351.7L650.5 351.3Z" fill="#c900c9" stroke="#c900c9" stroke-width="1"/><path d="M650.4 351.7L621.6 359.3L619.9 377.5L649.4 370.6Z" fill="#bf00bf" stroke="#bf00bf" stroke-width="1"/><path d="M649.4 370.6L619.9 377.5L618.4 400.0L648.4 394.3Z" fill="#b100b1" stroke="#b100b1" stroke-width="1"/><path d="M648.4 394.3L618.4 400.0L617.5 419.1L648.2 401.6Z" fill="#a000a0" stroke="#a000a0" stroke-width="1"/><path d="M617.5 621.0L618.1 633.1L648.2 640.2L648.2 639.6Z" fill="#830083" stroke="#830083" stroke-width="1"/><path d="M648.2 640.2L618.1 633.1L619.6 652.7L649.2 660.6Z" fill="#900090" stroke="#900090" stroke-width="1"/><path d="M649.2 660.6L619.6 652.7L621.2 667.4L650.2 675.9Z" fill="#9c009c" stroke="#9c009c" stroke-width="1"/><path d="M650.2 675.9L621.2 667.4L622.5 674.5L650.5 678.7Z" fill="#a400a4" stroke="#a400a4" stroke-width="1"/><path d="M598.1 353.9L597.1 357.7L607.0 353.2Z" fill="#dc00dc" stroke="#dc00dc" stroke-width="1"/><path d="M607.0 353.2L597.1 357.7L594.9 370.4L621.6 359.3L622.5 352.3Z" fill="#d600d6" stroke="#d600d6" stroke-width="1"/><path d="M621.6 359.3L594.9 370.4L592.8 387.4L619.9 377.5Z" fill="#cd00cd" stroke="#cd00cd" stroke-width="1"/><path d="M619.9 377.5L592.8 387.4L590.9 408.3L618.4 400.0Z" fill="#c000c0" stroke="#c000c0" stroke-width="1"/><path d="M618.4 400.0L590.9 408.3L589.4 432.7L606.7 428.8L617.5 419.1Z" fill="#af00af" stroke="#af00af" stroke-width="1"/><path d="M606.7 428.8L589.4 432.7L588.6 450.6Z" fill="#9b009b" stroke="#9b009b" stroke-width="1"/><path d="M588.6 589.6L589.1 600.9L599.6 604.0Z" fill="#840084" stroke="#840084" stroke-width="1"/><path d="M599.6 604.0L589.1 600.9L590.6 623.0L618.1 633.1L617.5 621.0Z" fill="#930093" stroke="#930093" stroke-width="1"/><path d="M618.1 633.1L590.6 623.0L592.4 641.1L619.6 652.7Z" fill="#a000a0" stroke="#a000a0" stroke-width="1"/><path d="M619.6 652.7L592.4 641.1L594.4 654.9L621.2 667.4Z" fill="#ab00ab" stroke="#ab00ab" stroke-width="1"/><path d="M621.2 667.4L594.4 654.9L596.6 664.2L613.1 672.3L622.5 674.5Z" fill="#b300b3" stroke="#b300b3" stroke-width="1"/><path d="M613.1 672.3L596.6 664.2L598.1 667.4Z" fill="#b800b8" stroke="#b800b8" stroke-width="1"/><path d="M585.9 356.1L578.6 361.1L576.0 365.1L591.3 354.8Z" fill="#e400e4" stroke="#e400e4" stroke-width="1"/><path d="M591.3 354.8L576.0 365.1L573.5 372.9L597.1 357.7L598.1 353.9Z" fill="#e300e3" stroke="#e300e3" stroke-width="1"/><path d="M597.1 357.7L573.5 372.9L571.0 384.6L594.9 370.4Z" fill="#de00de" stroke="#de00de" stroke-width="1"/><path d="M594.9 370.4L571.0 384.6L568.8 400.0L592.8 387.4Z" fill="#d500d5" stroke="#d500d5" stroke-width="1"/><path d="M592.8 387.4L568.8 400.0L566.7 418.9L590.9 408.3Z" fill="#c900c9" stroke="#c900c9" stroke-width="1"/><path d="M590.9 408.3L566.7 418.9L565.0 440.7L589.4 432.7Z" fill="#ba00ba" stroke="#ba00ba" stroke-width="1"/><path d="M589.4 432.7L565.0 440.7L563.7 464.9L582.5 461.0L588.6 450.6Z" fill="#a700a7" stroke="#a700a7" stroke-width="1"/><path d="M582.5 461.0L563.7 464.9L562.9 490.5L571.9 489.9Z" fill="#920092" stroke="#920092" stroke-width="1"/><path d="M571.9 489.9L562.9 490.5L562.6 516.9L568.0 517.2Z" fill="#920092" stroke="#920092" stroke-width="1"/><path d="M568.0 517.2L562.6 516.9L562.8 542.9L570.5 544.3Z" fill="#8f008f" stroke="#8f008f" stroke-width="1"/><path d="M570.5 544.3L562.8 542.9L563.5 567.6L579.5 572.7Z" fill="#8a008a" stroke="#8a008a" stroke-width="1"/><path d="M579.5 572.7L563.5 567.6L564.7 590.3L589.1 600.9L588.6 589.6Z" fill="#920092" stroke="#920092" stroke-width="1"/><path d="M589.1 600.9L564.7 590.3L566.3 610.1L590.6 623.0Z" fill="#a000a0" stroke="#a000a0" stroke-width="1"/><path d="M590.6 623.0L566.3 610.1L568.3 626.5L592.4 641.1Z" fill="#ac00ac" stroke="#ac00ac" stroke-width="1"/><path d="M592.4 641.1L568.3 626.5L570.5 639.1L594.4 654.9Z" fill="#b600b6" stroke="#b600b6" stroke-width="1"/><path d="M594.4 654.9L570.5 639.1L572.9 647.7L596.6 664.2Z" fill="#be00be" stroke="#be00be" stroke-width="1"/><path d="M596.6 664.2L572.9 647.7L575.5 652.3L593.5 665.1L598.1 667.4Z" fill="#c200c2" stroke="#c200c2" stroke-width="1"/><path d="M578.6 361.1L558.3 380.2L555.7 384.0L576.0 365.1Z" fill="#e600e6" stroke="#e600e6" stroke-width="1"/><path d="M576.0 365.1L555.7 384.0L553.2 391.1L573.5 372.9Z" fill="#e500e5" stroke="#e500e5" stroke-width="1"/><path d="M573.5 372.9L553.2 391.1L550.7 401.4L571.0 384.6Z" fill="#e000e0" stroke="#e000e0" stroke-width="1"/><path d="M571.0 384.6L550.7 401.4L548.4 414.9L568.8 400.0Z" fill="#d900d9" stroke="#d900d9" stroke-width="1"/><path d="M568.8 400.0L548.4 414.9L546.4 431.3L566.7 418.9Z" fill="#ce00ce" stroke="#ce00ce" stroke-width="1"/><path d="M566.7 418.9L546.4 431.3L544.7 450.1L565.0 440.7Z" fill="#c000c0" stroke="#c000c0" stroke-width="1"/><path d="M565.0 440.7L544.7 450.1L543.4 470.8L563.7 464.9Z" fill="#af00af" stroke="#af00af" stroke-width="1"/><path d="M563.7 464.9L543.4 470.8L542.6 492.7L562.9 490.5Z" fill="#9e009e" stroke="#9e009e" stroke-width="1"/><path d="M562.9 490.5L542.6 492.7L542.3 515.1L562.6 516.9Z" fill="#9e009e" stroke="#9e009e" stroke-width="1"/><path d="M562.6 516.9L542.3 515.1L542.5 537.3L562.8 542.9Z" fill="#9b009b" stroke="#9b009b" stroke-width="1"/><path d="M562.8 542.9L542.5 537.3L543.2 558.4L563.5 567.6Z" fill="#970097" stroke="#970097" stroke-width="1"/><path d="M563.5 567.6L543.2 558.4L544.4 577.9L564.7 590.3Z" fill="#9c009c" stroke="#9c009c" stroke-width="1"/><path d="M564.7 590.3L544.4 577.9L546.0 594.9L566.3 610.1Z" fill="#a900a9" stroke="#a900a9" stroke-width="1"/><path d="M566.3 610.1L546.0 594.9L547.9 609.2L568.3 626.5Z" fill="#b400b4" stroke="#b400b4" stroke-width="1"/><path d="M568.3 626.5L547.9 609.2L550.2 620.3L570.5 639.1Z" fill="#bd00bd" stroke="#bd00bd" stroke-width="1"/><path d="M570.5 639.1L550.2 620.3L552.6 628.1L572.9 647.7Z" fill="#c300c3" stroke="#c300c3" stroke-width="1"/><path d="M572.9 647.7L552.6 628.1L555.2 632.4L575.5 652.3Z" fill="#c700c7" stroke="#c700c7" stroke-width="1"/><path d="M558.3 380.2L546.0 395.9L543.5 399.5L555.7 384.0Z" fill="#e200e2" stroke="#e200e2" stroke-width="1"/><path d="M555.7 384.0L543.5 399.5L541.1 405.9L553.2 391.1Z" fill="#e100e1" stroke="#e100e1" stroke-width="1"/><path d="M553.2 391.1L541.1 405.9L538.8 415.2L550.7 401.4Z" fill="#dd00dd" stroke="#dd00dd" stroke-width="1"/><path d="M550.7 401.4L538.8 415.2L536.6 427.0L548.4 414.9Z" fill="#d600d6" stroke="#d600d6" stroke-width="1"/><path d="M548.4 414.9L536.6 427.0L534.7 441.3L546.4 431.3Z" fill="#cd00cd" stroke="#cd00cd" stroke-width="1"/><path d="M546.4 431.3L534.7 441.3L533.2 457.6L544.7 450.1Z" fill="#c100c1" stroke="#c100c1" stroke-width="1"/><path d="M544.7 450.1L533.2 457.6L532.0 475.5L543.4 470.8Z" fill="#b300b3" stroke="#b300b3" stroke-width="1"/><path d="M543.4 470.8L532.0 475.5L531.2 494.4L542.6 492.7Z" fill="#a600a6" stroke="#a600a6" stroke-width="1"/><path d="M542.6 492.7L531.2 494.4L531.0 513.7L542.3 515.1Z" fill="#a600a6" stroke="#a600a6" stroke-width="1"/><path d="M542.3 515.1L531.0 513.7L531.1 532.8L542.5 537.3Z" fill="#a400a4" stroke="#a400a4" stroke-width="1"/><path d="M542.5 537.3L531.1 532.8L531.8 551.1L543.2 558.4Z" fill="#a100a1" stroke="#a100a1" stroke-width="1"/><path d="M543.2 558.4L531.8 551.1L532.9 567.9L544.4 577.9Z" fill="#a200a2" stroke="#a200a2" stroke-width="1"/><path d="M544.4 577.9L532.9 567.9L534.4 582.7L546.0 594.9Z" fill="#ad00ad" stroke="#ad00ad" stroke-width="1"/><path d="M546.0 594.9L534.4 582.7L536.2 595.2L547.9 609.2Z" fill="#b700b7" stroke="#b700b7" stroke-width="1"/><path d="M547.9 609.2L536.2 595.2L538.3 605.0L550.2 620.3Z" fill="#be00be" stroke="#be00be" stroke-width="1"/><path d="M550.2 620.3L538.3 605.0L540.5 612.0L552.6 628.1Z" fill="#c400c4" stroke="#c400c4" stroke-width="1"/><path d="M552.6 628.1L540.5 612.0L543.0 616.0L555.2 632.4Z" fill="#c700c7" stroke="#c700c7" stroke-width="1"/></g><defs><linearGradient id="fg" x1="0" y1="392.7" x2="0" y2="647.3" gradientUnits="userSpaceOnUse"><stop offset="0.000" stop-color="#f090f0"/><stop offset="0.250" stop-color="#dc78dc"/><stop offset="0.500" stop-color="#c866c8"/><stop offset="0.750" stop-color="#b04eb0"/><stop offset="1.000" stop-color="#983898"/></linearGradient></defs><path d="M570.5 544.3L579.5 572.7L588.6 589.6L599.6 604.0L617.5 621.0L648.2 639.6L651.5 640.6L680.0 647.3L712.0 647.3L740.5 640.6L743.8 639.6L774.5 621.0L792.4 604.0L803.4 589.6L812.5 572.7L821.5 544.3L824.0 517.2L820.1 489.9L809.5 461.0L803.4 450.6L785.3 428.8L774.5 419.1L743.8 401.6L712.0 392.7L680.0 392.7L648.2 401.6L617.5 419.1L606.7 428.8L588.6 450.6L582.5 461.0L571.9 489.9L568.0 517.2Z" fill="url(#fg)" shape-rendering="crispEdges"/></g></svg><div class="a" style="left:1076px;top:124px;width:1px;height:572px;background:#ffffff;"></div><div class="a" style="left:314px;top:695px;width:762px;height:1px;background:#ececec;"></div><div class="a" style="left:314px;top:696px;width:764px;height:1px;background:#8c8c8c;"></div><div class="a" style="left:653px;top:701px;width:1px;height:1px;background:#777;"></div><div class="a" style="left:656px;top:701px;width:1px;height:1px;background:#777;"></div><div class="a" style="left:659px;top:701px;width:1px;height:1px;background:#777;"></div><div class="a" style="left:662px;top:701px;width:1px;height:1px;background:#777;"></div><div class="a" style="left:665px;top:701px;width:1px;height:1px;background:#777;"></div><div class="a" style="left:668px;top:701px;width:1px;height:1px;background:#777;"></div><div class="a" style="left:671px;top:701px;width:1px;height:1px;background:#777;"></div><div class="a" style="left:674px;top:701px;width:1px;height:1px;background:#777;"></div><div class="a" style="left:677px;top:701px;width:1px;height:1px;background:#777;"></div><div class="a" style="left:680px;top:701px;width:1px;height:1px;background:#777;"></div><div class="a" style="left:683px;top:701px;width:1px;height:1px;background:#777;"></div><div class="a" style="left:686px;top:701px;width:1px;height:1px;background:#777;"></div><div class="a" style="left:689px;top:701px;width:1px;height:1px;background:#777;"></div><div class="a" style="left:692px;top:701px;width:1px;height:1px;background:#777;"></div><div class="a" style="left:695px;top:701px;width:1px;height:1px;background:#777;"></div><div class="a" style="left:698px;top:701px;width:1px;height:1px;background:#777;"></div><div class="a" style="left:701px;top:701px;width:1px;height:1px;background:#777;"></div><div class="a" style="left:704px;top:701px;width:1px;height:1px;background:#777;"></div><div class="a" style="left:707px;top:701px;width:1px;height:1px;background:#777;"></div><div class="a" style="left:710px;top:701px;width:1px;height:1px;background:#777;"></div><div class="a" style="left:713px;top:701px;width:1px;height:1px;background:#777;"></div><div class="a" style="left:716px;top:701px;width:1px;height:1px;background:#777;"></div><div class="a" style="left:719px;top:701px;width:1px;height:1px;background:#777;"></div><div class="a" style="left:722px;top:701px;width:1px;height:1px;background:#777;"></div><div class="a" style="left:725px;top:701px;width:1px;height:1px;background:#777;"></div><div class="a" style="left:728px;top:701px;width:1px;height:1px;background:#777;"></div><div class="a" style="left:731px;top:701px;width:1px;height:1px;background:#777;"></div><div class="a" style="left:734px;top:701px;width:1px;height:1px;background:#777;"></div><div class="a" style="left:737px;top:701px;width:1px;height:1px;background:#777;"></div><div class="a" style="left:740px;top:701px;width:1px;height:1px;background:#777;"></div><div class="a" style="left:314px;top:705px;width:71px;height:21px;background:#e8e8e8;"></div><div class="a" style="left:316px;top:705px;width:68px;height:1px;background:#ffffff;"></div><div class="a" style="left:314px;top:707px;width:1px;height:19px;background:#ffffff;"></div><div class="a" style="left:315px;top:706px;width:1px;height:1px;background:#ffffff;"></div><div class="a" style="left:384px;top:706px;width:1px;height:19px;background:#8c8c8c;"></div><div class="a t" style="left:320px;top:715px;font-size:12px;color:#000;">Command</div><div class="a" style="left:385px;top:725px;width:692px;height:1px;background:#ffffff;"></div><div class="a t" style="left:324px;top:741px;font-size:12px;color:#000;letter-spacing:0.27px">Command (local):</div><div class="a" style="left:433px;top:731px;width:635px;height:21px;background:#fff;"></div><div class="a" style="left:433px;top:731px;width:635px;height:1px;background:#8c8c8c;"></div><div class="a" style="left:433px;top:731px;width:1px;height:21px;background:#8c8c8c;"></div><div class="a" style="left:433px;top:751px;width:635px;height:1px;background:#ffffff;"></div><div class="a" style="left:1067px;top:731px;width:1px;height:21px;background:#ffffff;"></div><div class="a" style="left:1051px;top:732px;width:16px;height:18px;background:#e8e8e8;border:1px solid #8c8c8c"></div><div class="a" style="left:1052px;top:733px;width:14px;height:1px;background:#ffffff;"></div><div class="a" style="left:1052px;top:733px;width:1px;height:16px;background:#ffffff;"></div><svg class="a" style="left:0;top:0" width="1136" height="902" shape-rendering="crispEdges"><path d="M1055 739h7v1h-7zM1056 740h5v1h-5zM1057 741h3v1h-3zM1058 742h1v1h-1z" fill="#000"/></svg><div class="a" style="left:319px;top:759px;width:754px;height:37px;background:#e8e8e8;"></div><div class="a" style="left:319px;top:759px;width:754px;height:1px;background:#8c8c8c;"></div><div class="a" style="left:319px;top:759px;width:1px;height:37px;background:#8c8c8c;"></div><div class="a" style="left:319px;top:795px;width:754px;height:1px;background:#ffffff;"></div><div class="a" style="left:1072px;top:759px;width:1px;height:37px;background:#ffffff;"></div><div class="a" style="left:323px;top:763px;width:748px;height:31px;background:#fff;"></div><div class="a" style="left:314px;top:800px;width:764px;height:1px;background:#8c8c8c;"></div><div class="a" style="left:57px;top:803px;width:334px;height:18px;background:#e8e8e8;"></div><div class="a" style="left:57px;top:803px;width:334px;height:1px;background:#8c8c8c;"></div><div class="a" style="left:57px;top:803px;width:1px;height:18px;background:#8c8c8c;"></div><div class="a" style="left:57px;top:820px;width:334px;height:1px;background:#ffffff;"></div><div class="a" style="left:390px;top:803px;width:1px;height:18px;background:#ffffff;"></div><div class="a" style="left:393px;top:803px;width:100px;height:18px;background:#e8e8e8;"></div><div class="a" style="left:393px;top:803px;width:100px;height:1px;background:#8c8c8c;"></div><div class="a" style="left:393px;top:803px;width:1px;height:18px;background:#8c8c8c;"></div><div class="a" style="left:393px;top:820px;width:100px;height:1px;background:#ffffff;"></div><div class="a" style="left:492px;top:803px;width:1px;height:18px;background:#ffffff;"></div><div class="a" style="left:495px;top:803px;width:100px;height:18px;background:#e8e8e8;"></div><div class="a" style="left:495px;top:803px;width:100px;height:1px;background:#8c8c8c;"></div><div class="a" style="left:495px;top:803px;width:1px;height:18px;background:#8c8c8c;"></div><div class="a" style="left:495px;top:820px;width:100px;height:1px;background:#ffffff;"></div><div class="a" style="left:594px;top:803px;width:1px;height:18px;background:#ffffff;"></div><div class="a" style="left:597px;top:803px;width:482px;height:18px;background:#e8e8e8;"></div><div class="a" style="left:597px;top:803px;width:482px;height:1px;background:#8c8c8c;"></div><div class="a" style="left:597px;top:803px;width:1px;height:18px;background:#8c8c8c;"></div><div class="a" style="left:597px;top:820px;width:482px;height:1px;background:#ffffff;"></div><div class="a" style="left:1078px;top:803px;width:1px;height:18px;background:#ffffff;"></div><div class="a" style="left:56px;top:54px;width:1px;height:764px;background:#ffffff;"></div><div class="a" style="left:1079px;top:54px;width:1px;height:764px;background:#f8f8f8;"></div><div class="a" style="left:60px;top:821px;width:1016px;height:1px;background:#ffffff;"></div><svg class="a" style="left:0;top:0" width="1136" height="902"><path d="M129 390h2v1h-2z M134 390h2v1h-2z M130 391h2v1h-2z M133 391h2v1h-2z M131 392h3v1h-3z M132 393h1v1h-1z" fill="#000" shape-rendering="crispEdges"/><path d="M229 390h2v1h-2z M234 390h2v1h-2z M230 391h2v1h-2z M233 391h2v1h-2z M231 392h3v1h-3z M232 393h1v1h-1z" fill="#000" shape-rendering="crispEdges"/><path d="M308 388v2h1v-2z M308 393v2h1v-2z M309 389v2h1v-2z M309 392v2h1v-2z M310 390v3h1v-3z M311 391v1h1v-1z" fill="#000" shape-rendering="crispEdges"/><path d="M308 488v2h1v-2z M308 493v2h1v-2z M309 489v2h1v-2z M309 492v2h1v-2z M310 490v3h1v-3z M311 491v1h1v-1z" fill="#000" shape-rendering="crispEdges"/><path d="M643 699h2v1h-2z M648 699h2v1h-2z M644 700h2v1h-2z M647 700h2v1h-2z M645 701h3v1h-3z M646 702h1v1h-1z" fill="#000" shape-rendering="crispEdges"/><path d="M743 699h2v1h-2z M748 699h2v1h-2z M744 700h2v1h-2z M747 700h2v1h-2z M745 701h3v1h-3z M746 702h1v1h-1z" fill="#000" shape-rendering="crispEdges"/><path d="M1068.5 820 L1078.5 810 M1072.5 820 L1078.5 814 M1076.5 820 L1078.5 818" stroke="#fff" stroke-width="1.6" transform="translate(-1,0)"/><path d="M1068.5 820.5 L1078.5 810.5 M1072.5 820.5 L1078.5 814.5 M1076.5 820.5 L1078.5 818.5" stroke="#8a8a8a" stroke-width="1.5"/></svg>
</body></html>
